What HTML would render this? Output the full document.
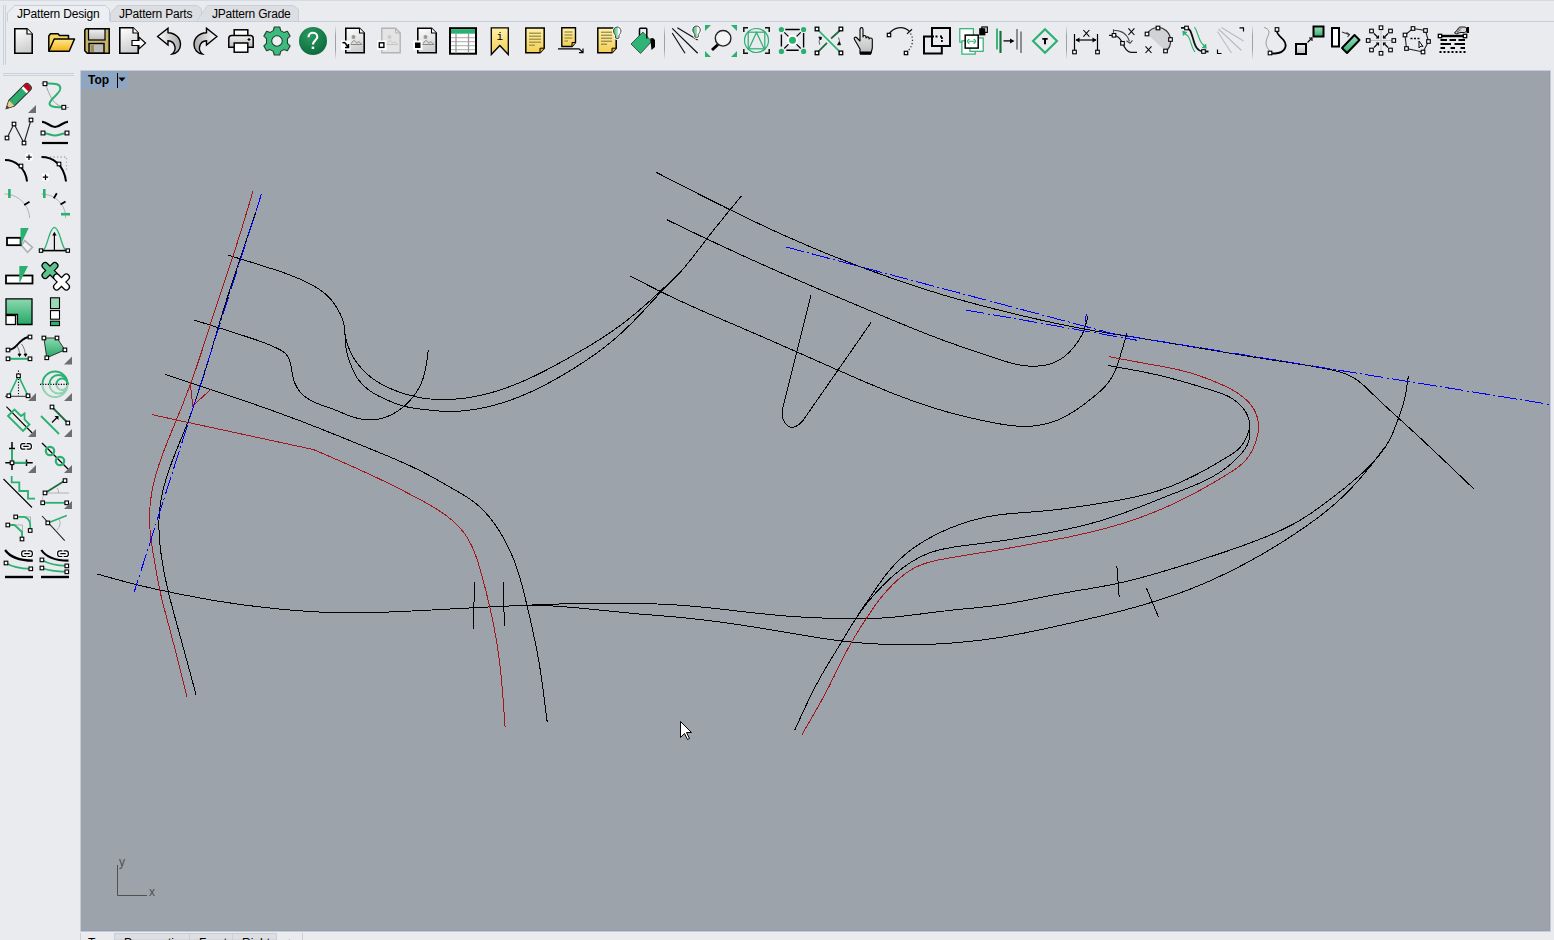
<!DOCTYPE html>
<html><head><meta charset="utf-8">
<style>
html,body{margin:0;padding:0;}
body{width:1554px;height:940px;overflow:hidden;background:#e9ebef;position:relative;font-family:"Liberation Sans",sans-serif;}
.abs{position:absolute;}
.tab{position:absolute;height:16px;font-size:12px;line-height:16px;color:#000;letter-spacing:-0.2px;white-space:nowrap;}
#viewport{left:80px;top:70px;width:1470px;height:861px;background:#9da3ab;}
</style></head>
<body>
<div class="abs" style="left:0;top:0;width:1554px;height:1px;background:#d5d9e0"></div>
<svg class="abs" style="left:0;top:0" width="1554" height="70">
  <line x1="3.5" y1="5" x2="3.5" y2="65" stroke="#c9d1de"/>
  <line x1="5.5" y1="5" x2="5.5" y2="65" stroke="#c9d1de"/>
  <path d="M110.5,21.5 L110.5,13 L117.5,5.5 L197.5,5.5 L201.5,9 L201.5,21.5 Z" fill="#dcdee2" stroke="#c8cfdc" stroke-width="1"/>
  <path d="M196.5,21.5 L207.5,5.5 L293.5,5.5 L298.5,9.5 L298.5,21.5 Z" fill="#dcdee2" stroke="#c8cfdc" stroke-width="1"/>
  <path d="M7.5,21.5 L7.5,13 L14.5,5.5 L105.5,5.5 L109.5,9.5 L109.5,21.5" fill="#eceef2" stroke="#c8cfdc" stroke-width="1"/>
  <line x1="110" y1="21.5" x2="1554" y2="21.5" stroke="#c8cfdc"/>
</svg>
<div class="tab" style="left:17px;top:6px">JPattern Design</div>
<div class="tab" style="left:119px;top:6px">JPattern Parts</div>
<div class="tab" style="left:212px;top:6px">JPattern Grade</div>
<div id="viewport" class="abs"></div>
<div class="abs" style="left:80px;top:70px;width:1471px;height:1px;background:#c5ccd8"></div>
<div class="abs" style="left:80px;top:70px;width:1px;height:862px;background:#c5ccd8"></div>
<div class="abs" style="left:1549px;top:71px;width:1px;height:860px;background:#979da6"></div>
<div class="abs" style="left:81px;top:930px;width:1469px;height:1px;background:#979da6"></div>
<div class="abs" style="left:1550px;top:70px;width:1px;height:862px;background:#c3ccdb"></div>
<div class="abs" style="left:80px;top:931px;width:1471px;height:1px;background:#c3ccdb"></div>
<div class="abs" style="left:81px;top:71px;width:47px;height:18px;background:#8ea6c2"></div>
<div class="abs" style="left:88px;top:72px;font-size:12px;font-weight:bold;line-height:16px;color:#000">Top</div>
<svg class="abs" style="left:110px;top:71px" width="20" height="18"><line x1="7.5" y1="2" x2="7.5" y2="17" stroke="#000"/><path d="M8.5,6.5 L15.5,6.5 L12,10.5 Z" fill="#000"/></svg>
<div class="abs" style="left:3px;top:73px;width:71px;height:1px;background:#c9d1de"></div>
<div class="abs" style="left:3px;top:75px;width:71px;height:1px;background:#c9d1de"></div>
<svg class="abs" style="left:0;top:0" width="1554" height="66">
<defs>
<linearGradient id="gDoc" x1="0" y1="0" x2="0.3" y2="1"><stop offset="0" stop-color="#ffffff"/><stop offset="1" stop-color="#cfcfcf"/></linearGradient>
<linearGradient id="gYel" x1="0" y1="0" x2="0" y2="1"><stop offset="0" stop-color="#fff1a8"/><stop offset="1" stop-color="#f2cf55"/></linearGradient>
<linearGradient id="gFold" x1="0" y1="0" x2="0" y2="1"><stop offset="0" stop-color="#ffe98a"/><stop offset="1" stop-color="#f5b21c"/></linearGradient>
<linearGradient id="gArrow" x1="0" y1="0" x2="1" y2="0"><stop offset="0" stop-color="#ffffff"/><stop offset="1" stop-color="#a9a9a9"/></linearGradient>
<linearGradient id="gArrowR" x1="1" y1="0" x2="0" y2="0"><stop offset="0" stop-color="#ffffff"/><stop offset="1" stop-color="#a9a9a9"/></linearGradient>
<linearGradient id="gGreen" x1="0" y1="0" x2="0" y2="1"><stop offset="0" stop-color="#9fdcbc"/><stop offset="1" stop-color="#2fb070"/></linearGradient>
<radialGradient id="gHelp" cx="0.4" cy="0.3" r="0.7"><stop offset="0" stop-color="#2b9a62"/><stop offset="1" stop-color="#0d6b3d"/></radialGradient>
<linearGradient id="gBulb" x1="0" y1="0" x2="1" y2="0"><stop offset="0" stop-color="#3dba7d"/><stop offset="0.55" stop-color="#a6dfc0"/><stop offset="0.56" stop-color="#fff"/><stop offset="1" stop-color="#fff"/></linearGradient>
<linearGradient id="gSep" gradientUnits="userSpaceOnUse" x1="0" y1="25" x2="0" y2="60"><stop offset="0" stop-color="#e9ebef"/><stop offset="0.3" stop-color="#9ea2a8"/><stop offset="0.7" stop-color="#9ea2a8"/><stop offset="1" stop-color="#e9ebef"/></linearGradient>
<linearGradient id="gGrey" x1="0" y1="0" x2="0" y2="1"><stop offset="0" stop-color="#f2f2f2"/><stop offset="1" stop-color="#bdbdbd"/></linearGradient>
</defs>
<!-- 1 new -->
<g transform="translate(14,28)" stroke="#000" stroke-width="1.6" stroke-linejoin="miter">
<path d="M0.8,0.8 H13 L18.2,6 V25.2 H0.8 Z" fill="url(#gDoc)"/><path d="M13,0.8 V6 H18.2" fill="#fff" stroke-width="1.2"/>
</g>
<!-- 2 open -->
<g transform="translate(48,33)" stroke="#000" stroke-width="1.5" stroke-linejoin="round">
<path d="M0.8,18 V3 L2.5,0.8 H10 L11.5,2.5 H20.5 V6" fill="#f7d660"/>
<path d="M0.8,18.2 L6.2,6 H26.5 L21.2,18.2 Z" fill="url(#gFold)"/>
</g>
<!-- 3 save -->
<g transform="translate(84,28)" stroke="#000" stroke-width="1.5">
<path d="M2,0.8 H25.2 V25.2 H3.2 L0.8,22.8 V2 Z" fill="#c8b46a"/>
<rect x="4.5" y="1" width="16.5" height="11" fill="url(#gGrey)" stroke-width="1.2"/>
<rect x="5" y="15.5" width="15" height="9.5" fill="#bcbcbc" stroke-width="1.4"/>
<rect x="6.5" y="17" width="3.5" height="7" fill="#9c8c4a" stroke="none"/>
</g>
<!-- 4 export -->
<g transform="translate(119,27)" stroke="#000" stroke-width="1.6">
<path d="M0.8,0.8 H14 L19.2,6 V26.2 H0.8 Z" fill="url(#gDoc)"/><path d="M14,0.8 V6 H19.2" fill="#fff" stroke-width="1.2"/>
<path d="M13,13.5 H20 V10 L26.5,16 L20,22 V18.5 H13 Z" fill="#fff" stroke-width="1.2"/>
</g>
<!-- 5 undo -->
<g transform="translate(157,27.5)" stroke="#000" stroke-width="1.4" stroke-linejoin="miter">
<path d="M0.6,9 L11,0.6 V5.2 C18.5,5.5 23.5,10.5 23.5,17 C23.5,22 20,26 15,26.5 C17.5,24.5 18.5,22 18,19.5 C17.3,16 14.5,13.5 11,13.3 V17.5 Z" fill="url(#gArrow)"/>
</g>
<!-- 6 redo -->
<g transform="translate(193.5,27.5)" stroke="#000" stroke-width="1.4" stroke-linejoin="miter">
<path d="M23.4,9 L13,0.6 V5.2 C5.5,5.5 0.5,10.5 0.5,17 C0.5,22 4,26 9,26.5 C6.5,24.5 5.5,22 6,19.5 C6.7,16 9.5,13.5 13,13.3 V17.5 Z" fill="url(#gArrowR)"/>
</g>
<!-- 7 printer -->
<g transform="translate(228,29)" stroke="#000" stroke-width="1.5">
<rect x="6.2" y="0.8" width="13.6" height="6" fill="#fff"/>
<path d="M0.8,18.2 V9.5 Q0.8,6.5 3.8,6.5 H22.2 Q25.2,6.5 25.2,9.5 V18.2 Z" fill="url(#gGrey)"/>
<rect x="6.2" y="14" width="13.6" height="9.2" fill="#fff"/>
<path d="M21,9 v3 M19.5,10.5 h3" stroke-width="1.2"/>
</g>
<!-- 8 gear -->
<g transform="translate(277,41) scale(1.06)">
<path d="M-2.6,-13.2 L2.6,-13.2 L3.5,-9.8 L6.4,-8.1 L9.8,-9.1 L12.4,-4.6 L9.9,-2.2 L9.9,2.2 L12.4,4.6 L9.8,9.1 L6.4,8.1 L3.5,9.8 L2.6,13.2 L-2.6,13.2 L-3.5,9.8 L-6.4,8.1 L-9.8,9.1 L-12.4,4.6 L-9.9,2.2 L-9.9,-2.2 L-12.4,-4.6 L-9.8,-9.1 L-6.4,-8.1 L-3.5,-9.8 Z" fill="#3dba7d" stroke="#2a3a30" stroke-width="1" stroke-linejoin="round"/>
<circle r="5" fill="#eef0f2" stroke="#1d3a2a" stroke-width="1"/>
</g>
<!-- 9 help -->
<g transform="translate(313,41)">
<circle r="14" fill="url(#gHelp)"/>

</g>
<path d="M308.5,37.2 C308.5,34.5 310.5,32.8 313,32.8 C315.5,32.8 317.3,34.6 317.3,37 C317.3,39.8 312.9,40.8 312.9,44.5" fill="none" stroke="#fff" stroke-width="2.1"/><rect x="311.7" y="46.6" width="2.5" height="2.4" fill="#fff"/>
<!-- separator -->
<line x1="335.5" y1="25" x2="335.5" y2="60" stroke="url(#gSep)"/>

<!-- 10 doc img arrow -->
<g transform="translate(345,27.5)">
<path d="M0.8,0.8 H14.5 L19.2,5.5 V25.2 H0.8 Z" fill="url(#gDoc)" stroke="#000" stroke-width="1.6"/><path d="M14.5,0.8 V5.5 H19.2" fill="#fff" stroke="#000" stroke-width="1.1"/>
<circle cx="8.5" cy="9.5" r="2" fill="#999"/><path d="M5,17 L9,12.8 L12,15.8 L13.8,14 L16.8,17 Z" fill="none" stroke="#888" stroke-width="1"/>
<rect x="-4" y="13" width="9.5" height="9.5" fill="#fff"/>
<path d="M-2.5,15.5 Q0,14 1.5,17.5 L3,19.5 M3.5,16.5 V20 H0" fill="none" stroke="#000" stroke-width="1.5"/>
</g>
<!-- 11 doc img disabled -->
<g transform="translate(381,27.5)">
<path d="M0.8,0.8 H14.5 L19.2,5.5 V25.2 H0.8 Z" fill="#e4e4e4" stroke="#b4b4b4" stroke-width="1.4"/><path d="M14.5,0.8 V5.5 H19.2" fill="none" stroke="#b4b4b4" stroke-width="1"/>
<circle cx="8.5" cy="9.5" r="2" fill="#ccc"/><path d="M5,17 L9,12.8 L12,15.8 L13.8,14 L16.8,17 Z" fill="none" stroke="#c4c4c4" stroke-width="1"/>
<rect x="-4" y="13" width="9.5" height="9.5" fill="#fff"/>
<rect x="-1.7" y="15.3" width="4.6" height="4.6" fill="#fff" stroke="#000" stroke-width="1.4"/>
</g>
<!-- 12 doc img black sq -->
<g transform="translate(417,27.5)">
<path d="M0.8,0.8 H14.5 L19.2,5.5 V25.2 H0.8 Z" fill="url(#gDoc)" stroke="#000" stroke-width="1.6"/><path d="M14.5,0.8 V5.5 H19.2" fill="#fff" stroke="#000" stroke-width="1.1"/>
<circle cx="8.5" cy="9.5" r="2" fill="#999"/><path d="M5,17 L9,12.8 L12,15.8 L13.8,14 L16.8,17 Z" fill="none" stroke="#888" stroke-width="1"/>
<rect x="-4" y="13" width="9.5" height="9.5" fill="#fff"/>
<rect x="-2" y="15" width="5.5" height="5.5" fill="#000"/>
</g>
<!-- 13 table -->
<g transform="translate(449,27.2)">
<rect x="1" y="1" width="26" height="25.5" fill="#fff" stroke="#000" stroke-width="2"/>
<rect x="2" y="2" width="24" height="4.5" fill="#2ab070"/>
<path d="M2,10.5 H26 M2,14.5 H26 M2,18.5 H26 M2,22.5 H26" stroke="#aaa" stroke-width="1"/>
<path d="M7,6.5 V26 M19.5,6.5 V26" stroke="#999" stroke-width="1.3"/>
</g>
<!-- 14 bookmark -->
<g transform="translate(490.5,27)">
<path d="M0.8,0.8 H17.8 V27.5 L9.3,18.5 L0.8,27.5 Z" fill="url(#gYel)" stroke="#000" stroke-width="1.3"/>
<text x="9.3" y="13" text-anchor="middle" font-family="Liberation Mono" font-size="11" fill="#000">i</text>
</g>
<!-- 15 yellow doc -->
<g transform="translate(525,27.2)">
<path d="M0.8,0.8 H19.2 V21 L15,25.5 H0.8 Z" fill="url(#gYel)" stroke="#000" stroke-width="1.5"/>
<path d="M15,25.5 V21 H19.2" fill="#f0b030" stroke="#000" stroke-width="1"/>
<path d="M4,6 H16 M4,9 H16 M4,12 H16 M4,15 H16 M4,18 H10" stroke="#a89a50" stroke-width="1.6"/>
</g>
<!-- 16 small doc + arrow -->
<g transform="translate(558,27)">
<path d="M3.8,0.8 H17.5 V15.5 L14,19.5 H3.8 Z" fill="url(#gYel)" stroke="#000" stroke-width="1.4"/>
<path d="M14,19.5 V15.5 H17.5" fill="#f0b030" stroke="#000" stroke-width="1"/>
<path d="M6.5,5 H14.5 M6.5,8 H14.5 M6.5,11 H14.5 M6.5,14 H10" stroke="#a89a50" stroke-width="1.6"/>
<path d="M0,21.8 H21 L25,25.5 M25,21.5 V25.7 H21" fill="none" stroke="#000" stroke-width="1.2"/>
</g>
<!-- 17 yellow doc + bulb -->
<g transform="translate(597,27.2)">
<path d="M0.8,0.8 H19.2 V21 L15,25.5 H0.8 Z" fill="url(#gYel)" stroke="#000" stroke-width="1.5"/>
<path d="M15,25.5 V21 H19.2" fill="#f0b030" stroke="#000" stroke-width="1"/>
<path d="M4,5 H15 M4,8 H15 M4,11 H15 M4,14 H15 M4,17 H10" stroke="#7a7040" stroke-width="1"/>
</g>
<g transform="translate(613.2,27.0)"><path d="M0.3,4 C0.3,1.5 2,0 4,0 C6,0 7.8,1.5 7.8,4 C7.8,6 6.5,7 5.8,8.5 V11 Q4,12.2 2.3,11 V8.5 C1.5,7 0.3,6 0.3,4 Z" fill="#fff" stroke="#fff" stroke-width="2.6"/><path d="M0.3,4 C0.3,1.5 2,0 4,0 C6,0 7.8,1.5 7.8,4 C7.8,6 6.5,7 5.8,8.5 V11 Q4,12.2 2.3,11 V8.5 C1.5,7 0.3,6 0.3,4 Z" fill="url(#gBulb)" stroke="#333" stroke-width="0.9"/></g>
<!-- 18 paint bucket -->
<g>
<path d="M639.5,38 V29.2 Q639.5,28.3 640.5,28.3 H646 Q646.8,28.3 646.8,29.2 V33" fill="none" stroke="#000" stroke-width="1.5"/>
<path d="M631,44 L642.9,32.1 L651.7,41.4 L640.5,53.5 Z" fill="#2eb575" stroke="#2a3a30" stroke-width="0.8"/>
<path d="M646.8,33 V38.5" stroke="#000" stroke-width="1.5"/>
<path d="M650.2,38.5 L653,38 L655,40 V47 L651.5,50 Z" fill="#000"/>
</g>
<line x1="664.5" y1="25" x2="664.5" y2="60" stroke="url(#gSep)"/>

<!-- 19 lines + bulb -->
<g transform="translate(671.5,26)">
<path d="M0.7,2.4 L26.2,27.3 M0.7,7 L13.5,27.3 M5.9,1.8 L26.2,14" stroke="#111" stroke-width="1.2" fill="none"/>
</g>
<g transform="translate(692.5,26.0)"><path d="M0.3,4 C0.3,1.5 2,0 4,0 C6,0 7.8,1.5 7.8,4 C7.8,6 6.5,7 5.8,8.5 V11 Q4,12.2 2.3,11 V8.5 C1.5,7 0.3,6 0.3,4 Z" fill="#fff" stroke="#fff" stroke-width="2.6"/><path d="M0.3,4 C0.3,1.5 2,0 4,0 C6,0 7.8,1.5 7.8,4 C7.8,6 6.5,7 5.8,8.5 V11 Q4,12.2 2.3,11 V8.5 C1.5,7 0.3,6 0.3,4 Z" fill="url(#gBulb)" stroke="#333" stroke-width="0.9"/></g>
<!-- 20 zoom -->
<g transform="translate(705,25)">
<path d="M0,0 H6 L0,6 Z M32,0 H26 L32,6 Z M0,32 H6 L0,26 Z M32,32 H26 L32,26 Z" fill="#2ab070"/>
<path d="M13,19.5 L7,25" stroke="#000" stroke-width="3"/>
<circle cx="18.1" cy="13.3" r="7.8" fill="#f4f4f4" stroke="#222" stroke-width="1.4"/>
</g>
<!-- 21 circle square triangle -->
<g transform="translate(743,27)">
<path d="M0.8,5 V0.8 H5 M22,0.8 H26.2 V5 M26.2,22 V26.2 H22 M5,26.2 H0.8 V22" fill="none" stroke="#111" stroke-width="1.5"/>
<circle cx="13.5" cy="13.5" r="12" fill="none" stroke="#2ab070" stroke-width="1.2"/>
<rect x="5.2" y="5.2" width="16.6" height="16.6" fill="none" stroke="#2ab070" stroke-width="1.2"/>
<path d="M6,21.5 L13.5,5.5 L21,21.5" fill="none" stroke="#2ab070" stroke-width="1.2"/>
</g>
<!-- 22 square dots -->
<g>
<path d="M785.3,29.5 H799.7 M786.3,50.3 H798.7 M781.4,34.4 V46.5 M803.6,33 V47.5" stroke="#000" stroke-width="1.4"/>
<path d="M784.3,32.3 L788.6,36.7 M800.7,32.3 L796.4,36.7 M784.3,48.5 L788.6,44.1 M800.7,48.5 L796.4,44.1" stroke="#000" stroke-width="1.2"/>
<circle cx="792.5" cy="40.3" r="5.5" fill="#fff"/>
<circle cx="792.5" cy="40.3" r="3.5" fill="#2ab070"/>
<circle cx="781.4" cy="29.5" r="2.6" fill="#2ab070"/><circle cx="803.6" cy="29.5" r="2.6" fill="#2ab070"/>
<circle cx="781.4" cy="51.4" r="2.6" fill="#2ab070"/><circle cx="803.6" cy="51.4" r="2.6" fill="#2ab070"/>
</g>
<!-- 23 x squares -->
<g>
<path d="M817,29 L840.9,52.9" stroke="#2ab070" stroke-width="1.7"/>
<path d="M818,51.9 L827,42.9 M831.1,38.5 L839.9,30.5" stroke="#1d6a40" stroke-width="1.7"/>
<path d="M819.8,38.5 Q818.3,41.5 819.8,44.7 M838.5,37.5 Q840.2,40.5 838.8,43.8" fill="none" stroke="#555" stroke-width="0.9"/>
<path d="M818.8,37 L821.5,37.3 L820.8,40 Z M837.5,44.8 L840.5,44.8 L839.5,41.8 Z" fill="#000" stroke="#000" stroke-width="0.8"/>
<rect x="815.2" y="27.2" width="3.6" height="3.6" fill="#fff" stroke="#000" stroke-width="1.3"/><rect x="839.1" y="27.2" width="3.6" height="3.6" fill="#fff" stroke="#000" stroke-width="1.3"/><rect x="815.2" y="51.1" width="3.6" height="3.6" fill="#fff" stroke="#000" stroke-width="1.3"/><rect x="839.1" y="51.1" width="3.6" height="3.6" fill="#fff" stroke="#000" stroke-width="1.3"/>
</g>
<!-- 24 hand -->
<g transform="translate(853.5,27)">
<path d="M6.5,26.5 V22 L1,12.5 C0,11 1.5,9.5 3,10.5 L6.5,14 V2.5 C6.5,0 9.5,0 9.5,2.5 V10 C9.5,8 12.5,8 12.5,10 V11 C12.5,9.5 15.5,9.5 15.5,11 V12 C15.5,10.5 18.8,10.5 18.8,12.5 V21 L17.5,26.5 Z" fill="url(#gGrey)" stroke="#000" stroke-width="1.1" stroke-linejoin="round"/>
<rect x="6.5" y="24.5" width="11" height="3.3" fill="#000"/>
</g>
<!-- 25 arc -->
<g>
<path d="M889,34 C893,27.5 903,25 909.5,31.5" fill="none" stroke="#111" stroke-width="1.3"/>
<path d="M907,33.9 L912,29.2" stroke="#111" stroke-width="1.3"/>
<path d="M910.5,33.5 C913.5,38 913.5,45 908,51" fill="none" stroke="#333" stroke-width="1.3" stroke-dasharray="1.3,2"/>
<rect x="887.3" y="33.3" width="3.4" height="3.4" fill="#fff" stroke="#000" stroke-width="1.2"/><rect x="904.3" y="51.3" width="3.4" height="3.4" fill="#fff" stroke="#000" stroke-width="1.2"/>
</g>
<!-- 26 two squares -->
<g>
<rect x="932" y="28" width="18" height="18" fill="none" stroke="#000" stroke-width="2"/>
<path d="M932,36.5 H924 V53.5 H941.8 V46" fill="none" stroke="#000" stroke-width="2"/>
<path d="M932,35.5 h2 v2 h-2 Z M935.5,35.5 h2 v2 h-2 Z M940,35.5 h2 v2 h-2 Z M941,37 h1.8 v2 h-1.8 Z M941,40 h1.8 v2 h-1.8 Z" fill="#000"/>
</g>
<!-- 27 linked squares -->
<g transform="translate(959,26)">
<rect x="0.8" y="2.7" width="13.6" height="13.4" fill="#fff" stroke="#2ab070" stroke-width="1.2"/>
<rect x="2.9" y="14.8" width="13.3" height="13.3" fill="#fff" stroke="#2ab070" stroke-width="1.2"/>
<rect x="10.9" y="12" width="13.3" height="13.3" fill="#fff" stroke="#2ab070" stroke-width="1.2"/>
<rect x="6.2" y="9.1" width="13" height="13" fill="#fff" stroke="#000" stroke-width="1.5"/>
<path d="M10.5,13.5 H9.5 L8.3,15.3 L9.5,17.1 H10.5 M14.5,13.5 H15.5 L16.7,15.3 L15.5,17.1 H14.5 M9.5,15.3 H15.5" fill="none" stroke="#2ab070" stroke-width="1.1"/>
<rect x="22.9" y="1" width="5.4" height="5.4" fill="#fff" stroke="#000" stroke-width="1.2"/>
<rect x="20.2" y="2.2" width="6.2" height="7.2" fill="#000"/>
</g>
<!-- 28 bars arrow -->
<g transform="translate(996,28.4)">
<path d="M1,0 V21 M4.5,2.5 V24.5" stroke="#2ab070" stroke-width="1.8"/>
<path d="M4.5,2.5 V24.5" stroke="#1d6a40" stroke-width="1.8"/>
<path d="M7.5,12.5 H15" stroke="#000" stroke-width="1.3"/><path d="M14,10 L18.5,12.5 L14,15 Z" fill="#000"/>
<path d="M21,0.5 V21 M25,3 V24.5" stroke="#777" stroke-width="1.6"/>
</g>
<!-- 29 diamond T -->
<g transform="translate(1032,27.7)">
<path d="M13,1.5 L25,13.3 L13,25.1 L1,13.3 Z" fill="none" stroke="#2ab070" stroke-width="2.1"/>
<path d="M10.3,10.3 H15.7 V12 H14 V16.5 H12 V12 H10.3 Z" fill="#000"/>
</g>
<line x1="1066.5" y1="25" x2="1066.5" y2="60" stroke="url(#gSep)"/>

<path d="M1083.4,30.0 L1089.4,36.6 M1089.4,30.0 L1083.4,36.6" stroke="#000" stroke-width="1.1"/><path d="M1128.4,28.4 L1134.4,35.0 M1134.4,28.4 L1128.4,35.0" stroke="#000" stroke-width="1.1"/><path d="M1145.5,46.4 L1151.5,53.0 M1151.5,46.4 L1145.5,53.0" stroke="#000" stroke-width="1.1"/>
<!-- 30 dimension X -->
<g transform="translate(1073,28)">
<path d="M1.5,6 V24 M24.5,6 V24" stroke="#000" stroke-width="1.2"/>
<path d="M3,12 H23" stroke="#000" stroke-width="1.2"/><path d="M2.5,12 L6.5,9.5 V14.5 Z M23.5,12 L19.5,9.5 V14.5 Z" fill="#000"/>
<rect x="-0.3" y="22.2" width="3.6" height="3.6" fill="#fff" stroke="#000" stroke-width="1.1"/><rect x="22.7" y="22.2" width="3.6" height="3.6" fill="#fff" stroke="#000" stroke-width="1.1"/>
</g>
<!-- 31 curve X arrow -->
<g transform="translate(1109,27.8)">
<path d="M0,7.5 H5 M5,7.5 C10,8 12,12 13.5,15 C15.5,20.5 17.5,24.5 22,24.5 H28" fill="none" stroke="#111" stroke-width="1.2"/>
<path d="M4.5,1.5 V5 M4.5,2.5 C12,2.5 18,6 20.5,13.5" fill="none" stroke="#444" stroke-width="1.1"/>
<path d="M17.5,13 L21,15.5 L23.5,12.5" fill="none" stroke="#444" stroke-width="1.1"/>
<rect x="3.2" y="5.7" width="3.6" height="3.6" fill="#fff" stroke="#000" stroke-width="1.1"/><rect x="11.7" y="13.7" width="3.6" height="3.6" fill="#fff" stroke="#000" stroke-width="1.1"/>
</g>
<!-- 32 circle segment -->
<g transform="translate(1145,27)">
<path d="M2,7 C5,2 10,0.5 13,0.5 C19,0.5 25,5 25.5,12.5 C26,18 24,22 20.5,24 L13,17 Z" fill="#d0d2d6" stroke="none"/>
<path d="M2,7 C5,2 10,0.5 13,0.5 C19,0.5 25,5 25.5,12.5 C26,18 24,22 20.5,24" fill="none" stroke="#333" stroke-width="1.2"/>
<rect x="0.2" y="5.2" width="3.6" height="3.6" fill="#fff" stroke="#000" stroke-width="1.1"/><rect x="11.2" y="-0.8" width="3.6" height="3.6" fill="#fff" stroke="#000" stroke-width="1.1"/><rect x="23.7" y="10.7" width="3.6" height="3.6" fill="#fff" stroke="#000" stroke-width="1.1"/><rect x="18.7" y="22.2" width="3.6" height="3.6" fill="#fff" stroke="#000" stroke-width="1.1"/>
</g>
<!-- 33 S curve arrows -->
<g transform="translate(1181,27)">
<path d="M0,0.8 H5 C9,1 10,5 12,11.5 C14,19 16,24 22,24.5 H27.5" fill="none" stroke="#111" stroke-width="1.8"/>
<path d="M13.5,0 C17,5 17,11 20.5,16 L24.5,20" fill="none" stroke="#2ab070" stroke-width="1.1"/>
<path d="M21,20.5 L25,21 L24.5,17" fill="#2ab070" stroke="#2ab070" stroke-width="1.2"/>
<path d="M14,25 C10,20 10,13 7,9 L3,6" fill="none" stroke="#2ab070" stroke-width="1.1"/>
<path d="M6,5.5 L2,4.5 L2.5,8.5" fill="#2ab070" stroke="#2ab070" stroke-width="1.2"/>
<rect x="3.7" y="-0.8" width="3.6" height="3.6" fill="#fff" stroke="#000" stroke-width="1.1"/><rect x="20.7" y="22.7" width="3.6" height="3.6" fill="#fff" stroke="#000" stroke-width="1.1"/>
</g>
<!-- 34 disabled lines -->
<g transform="translate(1216.5,27)" stroke="#b8bbc0" stroke-width="1.1" fill="none">
<path d="M1,4.5 L15,26 M2,2 L25,23.5 M5,0.5 L27,14"/>
<path d="M23,0.8 H27 V4.5 M1,22.5 V26.5 H5" stroke="#000" stroke-width="1.2"/>
</g>
<line x1="1252.5" y1="25" x2="1252.5" y2="60" stroke="url(#gSep)"/>
<!-- 35 curve squares -->
<g transform="translate(1263,27)">
<path d="M1,0.5 C6,1.5 7,5 5,9 C3,13 1.5,18 6,23 L8,25" fill="none" stroke="#999" stroke-width="1"/>
<path d="M13.5,3 C14,8 18,10 20.5,13 C25,19 22,26 12,26.5 H7" fill="none" stroke="#000" stroke-width="1.8"/>
<rect x="12.2" y="0.7" width="3.6" height="3.6" fill="#fff" stroke="#000" stroke-width="1.1"/><rect x="5.2" y="24.2" width="3.6" height="3.6" fill="#fff" stroke="#000" stroke-width="1.1"/>
</g>
<!-- 36 scale squares -->
<g transform="translate(1295,25.5)">
<rect x="1" y="18.5" width="10" height="10" fill="url(#gGrey)" stroke="#000" stroke-width="2"/>
<rect x="18.5" y="1" width="10" height="10" fill="url(#gGreen)" stroke="#000" stroke-width="2"/>
<path d="M12.5,17 L17,12.5" stroke="#000" stroke-width="1.1"/><path d="M14,12.5 H17 V15.5" fill="none" stroke="#000" stroke-width="1.1"/>
</g>
<!-- 37 rect rotate -->
<g transform="translate(1331,27)">
<rect x="1" y="1" width="7" height="18.5" fill="#fff" stroke="#000" stroke-width="2"/>
<path d="M11,5 L18,7.5" stroke="#333" stroke-width="1.1"/><path d="M15.5,5.5 L18.5,7.5 L16.5,10" fill="none" stroke="#333" stroke-width="1.1"/>
<path d="M11,21 L23.5,8 L28.5,13 L16,26 Z" fill="url(#gGreen)" stroke="#000" stroke-width="2" stroke-linejoin="round"/>
</g>
<!-- 38 converge -->
<g transform="translate(1366,25.5)">
<path d="M15,2 V28 M2,15 H28" stroke="#bbb" stroke-width="1"/>
<path d="M8,8 L12.5,12.5 M22,8 L17.5,12.5 M8,22 L12.5,17.5 M22,22 L17.5,17.5" stroke="#000" stroke-width="1.1"/>
<path d="M10,12.5 H12.5 V10 M20,12.5 H17.5 V10 M10,17.5 H12.5 V20 M20,17.5 H17.5 V20" fill="none" stroke="#000" stroke-width="1.1"/>
<rect x="13.2" y="0.4" width="3.6" height="3.6" fill="#fff" stroke="#000" stroke-width="1.1"/><rect x="13.2" y="26.0" width="3.6" height="3.6" fill="#fff" stroke="#000" stroke-width="1.1"/><rect x="0.4" y="13.2" width="3.6" height="3.6" fill="#fff" stroke="#000" stroke-width="1.1"/><rect x="26.0" y="13.2" width="3.6" height="3.6" fill="#fff" stroke="#000" stroke-width="1.1"/><rect x="3.7" y="3.7" width="3.6" height="3.6" fill="#fff" stroke="#000" stroke-width="1.1"/><rect x="22.7" y="3.7" width="3.6" height="3.6" fill="#fff" stroke="#000" stroke-width="1.1"/><rect x="3.7" y="22.7" width="3.6" height="3.6" fill="#fff" stroke="#000" stroke-width="1.1"/><rect x="22.7" y="22.7" width="3.6" height="3.6" fill="#fff" stroke="#000" stroke-width="1.1"/>
</g>
<!-- 39 polygon -->
<g transform="translate(1403.5,27)">
<path d="M1.5,8 L9.5,1.5 L22,3.5 L25,14.5 L19.5,25 L3,21.5 Z" fill="none" stroke="#222" stroke-width="1.1"/>
<path d="M7,11.5 H9 M10.5,11.5 H12.5 M14,11.5 H16" stroke="#000" stroke-width="1.6"/>
<path d="M15.5,14 V21 L17.5,19 L19.5,19.5 Z" fill="#fff" stroke="#000" stroke-width="1"/>
<rect x="-0.3" y="6.2" width="3.6" height="3.6" fill="#fff" stroke="#000" stroke-width="1.1"/><rect x="7.7" y="-0.3" width="3.6" height="3.6" fill="#fff" stroke="#000" stroke-width="1.1"/><rect x="20.2" y="1.7" width="3.6" height="3.6" fill="#fff" stroke="#000" stroke-width="1.1"/><rect x="23.2" y="12.7" width="3.6" height="3.6" fill="#fff" stroke="#000" stroke-width="1.1"/><rect x="17.7" y="23.2" width="3.6" height="3.6" fill="#fff" stroke="#000" stroke-width="1.1"/><rect x="1.2" y="19.7" width="3.6" height="3.6" fill="#fff" stroke="#000" stroke-width="1.1"/>
</g>
<!-- 40 lines pencil -->
<g>
<path d="M1440,36 H1465" stroke="#000" stroke-width="2.4"/>
<path d="M1440.5,40 H1447 M1449.5,40 H1456 M1458.5,40 H1465" stroke="#000" stroke-width="2"/>
<path d="M1440.5,44 H1451 M1454.5,44 H1465" stroke="#000" stroke-width="2"/>
<path d="M1440.5,48 H1445 M1450.5,48 H1455 M1460.5,48 H1465" stroke="#000" stroke-width="2"/>
<path d="M1439.5,52 h2 M1443.5,52 h2 M1447.5,52 h2 M1451.5,52 h2 M1455.5,52 h2 M1459.5,52 h2 M1463.5,52 h2" stroke="#000" stroke-width="2"/>
<path d="M1454.5,33 L1459.5,27 H1465 L1466.5,28 V31.5 L1464.5,32.5 H1460 L1457,34 Z" fill="#d8d8d8" stroke="#000" stroke-width="0.9"/>
<path d="M1455,32.5 L1460,27.5 M1457,33 L1461.5,28 M1456,30.5 L1459,32.5 M1457.5,29 L1460.5,31" stroke="#555" stroke-width="0.7"/>
<rect x="1466.5" y="27" width="2.5" height="6" fill="#000"/>
<rect x="1438.3" y="34.3" width="3.4" height="3.4" fill="#fff" stroke="#000" stroke-width="1.3"/><rect x="1463.3" y="34.3" width="3.4" height="3.4" fill="#fff" stroke="#000" stroke-width="1.3"/>
</g>
</svg>
<svg class="abs" style="left:0;top:0" width="80" height="600">
<defs><linearGradient id="lgG" x1="0" y1="0" x2="0" y2="1"><stop offset="0" stop-color="#8ed8b0"/><stop offset="1" stop-color="#23a865"/></linearGradient><linearGradient id="lgG2" x1="0" y1="0" x2="1" y2="1"><stop offset="0" stop-color="#5ac08a"/><stop offset="1" stop-color="#a8e0c0"/></linearGradient></defs>
<g transform="translate(6,108.8) rotate(-45)">
<path d="M0,0 L8,-4 H30.5 Q33.5,-4 33.5,-1 V1 Q33.5,4 30.5,4 H8 Z" fill="#2ab070" stroke="#333" stroke-width="1.1" stroke-linejoin="round"/>
<path d="M28,-3.5 H30.5 Q33,-3.5 33,-1 V1 Q33,3.5 30.5,3.5 H28 Z" fill="#c8001a"/>
<rect x="25.5" y="-3.5" width="2.5" height="7" fill="#fff"/>
<path d="M0.5,0 L8,-3.6 V3.6 Z" fill="#f2cc88"/><path d="M0,0 L3.2,-1.6 V1.6 Z" fill="#444"/>
<path d="M10,-1.3 H25 M10,1.3 H25" stroke="#26a066" stroke-width="0.6"/>
</g>
<path d="M36.0,105.0 L36.0,113.0 L28.0,113.0 Z" fill="#6e6e6e"/>
<path d="M45,83.5 C50,95 52,104 62.5,107" fill="none" stroke="#999" stroke-width="0.9"/>
<path d="M45,83.5 C55,83 62,84 60,90 C58,95 49,100 49.5,104 C50,107 57,107.5 64,107" fill="none" stroke="#2ab070" stroke-width="2"/>
<path d="M41.5,83.5 H45 M64,107.5 H69" stroke="#999" stroke-width="0.9"/>
<rect x="43.1" y="81.8" width="3.8" height="3.8" fill="#fff" stroke="#000" stroke-width="1.1"/><rect x="61.9" y="105.4" width="3.8" height="3.8" fill="#fff" stroke="#000" stroke-width="1.1"/>
<path d="M7,138 L14,124 L24,143 L31,120" fill="none" stroke="#222" stroke-width="1.1"/>
<rect x="5.2" y="136.2" width="3.6" height="3.6" fill="#fff" stroke="#000" stroke-width="1.1"/><rect x="12.2" y="122.2" width="3.6" height="3.6" fill="#fff" stroke="#000" stroke-width="1.1"/><rect x="22.2" y="141.2" width="3.6" height="3.6" fill="#fff" stroke="#000" stroke-width="1.1"/><rect x="29.2" y="118.2" width="3.6" height="3.6" fill="#fff" stroke="#000" stroke-width="1.1"/>
<path d="M42,121.8 C46.5,121.5 50,127 55,127 C60,127 63.5,121.5 68,121.8" fill="none" stroke="#000" stroke-width="2.2"/>
<path d="M43,133 C49,133.5 51,135.5 55,135.5 C59,135.5 61,133.5 67,133" fill="none" stroke="#2ab070" stroke-width="2"/>
<path d="M42,143 H68" stroke="#000" stroke-width="2.2"/>
<rect x="41.1" y="131.1" width="3.8" height="3.8" fill="#fff" stroke="#000" stroke-width="1.1"/><rect x="65.1" y="131.1" width="3.8" height="3.8" fill="#fff" stroke="#000" stroke-width="1.1"/>
<path d="M5,160 C15,160 26,168 27,181.5" fill="none" stroke="#000" stroke-width="2"/>
<rect x="19.2" y="164.2" width="3.6" height="3.6" fill="#fff" stroke="#000" stroke-width="1.1"/>
<rect x="25.5" y="153.5" width="7" height="7" fill="#fff"/><path d="M29,154.5 V160 M26.3,157.2 H31.7" stroke="#000" stroke-width="1.2"/>
<path d="M50,157 H66.5 V172" fill="none" stroke="#aaa" stroke-width="1.3" stroke-dasharray="1.3,2.2"/>
<path d="M41.5,157 C52,157 64,164 66,181.5" fill="none" stroke="#000" stroke-width="2"/>
<rect x="57.2" y="162.2" width="3.6" height="3.6" fill="#fff" stroke="#000" stroke-width="1.1"/>
<rect x="42" y="173.5" width="7" height="7" fill="#fff"/><path d="M45.5,174.5 V180 M42.8,177.2 H48.2" stroke="#000" stroke-width="1.2"/>
<path d="M4.5,194 C16,194 29,203 29.5,218" fill="none" stroke="#aaa" stroke-width="0.9"/>
<path d="M9.4,189 V198" stroke="#2ab070" stroke-width="2.6"/>
<path d="M24.2,205 L29.5,201.8" stroke="#000" stroke-width="1.8"/>
<path d="M41.5,194 C53,194 66,203 65.5,218" fill="none" stroke="#aaa" stroke-width="0.9"/>
<path d="M44.3,189 V198" stroke="#2ab070" stroke-width="2.6"/>
<path d="M53.8,198.2 L56.8,193.2 M60.5,204.5 L65.5,201.5" stroke="#000" stroke-width="1.8"/>
<path d="M61,214.2 H70" stroke="#2ab070" stroke-width="2.6"/>
<path d="M21.3,245.2 L24.8,240.6 L32.4,247.3 L27.6,252.3 Z" fill="#f2f3f5" stroke="#b0b1b5" stroke-width="1.6"/>
<rect x="7" y="237.8" width="13.6" height="7.4" fill="#fff" stroke="#000" stroke-width="1.8"/>
<path d="M20.5,228 H28.7 L20.5,245.5 Z" fill="#2ab070"/>
<path d="M43.5,250 C48,246 49,228 54.4,227.3 C60,228 61,246 65.5,250" fill="none" stroke="#2ab070" stroke-width="1.3"/>
<path d="M41,250.6 H68" stroke="#000" stroke-width="1.6"/><path d="M54.4,250 V234" stroke="#000" stroke-width="1.2"/><path d="M52.2,235.5 L54.4,231.8 L56.6,235.5 Z" fill="#000"/>
<rect x="39.3" y="248.9" width="3.4" height="3.4" fill="#fff" stroke="#000" stroke-width="1.1"/><rect x="66.1" y="248.9" width="3.4" height="3.4" fill="#fff" stroke="#000" stroke-width="1.1"/>
<rect x="6" y="275.5" width="26.5" height="8" fill="#fff" stroke="#000" stroke-width="1.8"/>
<path d="M19.3,266 H28 L19.3,283.5 Z" fill="#2ab070"/>
<path d="M45.2,265.7 L54.8,275.3 M45.2,275.3 L54.8,265.7" stroke="#000" stroke-width="7.4" stroke-linecap="round"/><path d="M45.2,265.7 L54.8,275.3 M45.2,275.3 L54.8,265.7" stroke="#5cc28e" stroke-width="5" stroke-linecap="round"/>
<path d="M56.7,277.2 L66.3,286.8 M56.7,286.8 L66.3,277.2" stroke="#000" stroke-width="7.4" stroke-linecap="round"/><path d="M56.7,277.2 L66.3,286.8 M56.7,286.8 L66.3,277.2" stroke="#fff" stroke-width="5" stroke-linecap="round"/>
<path d="M6,298.8 H32 V324.5 H17.5 V314.5 H6 Z" fill="url(#lgG)" stroke="#000" stroke-width="1.3"/>
<rect x="6" y="315.5" width="9.5" height="9" fill="#fff" stroke="#000" stroke-width="1.3"/>
<rect x="50.5" y="297.8" width="9" height="10.8" fill="#9ad8b6" stroke="#000" stroke-width="1.1"/>
<rect x="50.5" y="310.6" width="9" height="8.6" fill="#fff" stroke="#000" stroke-width="1.1"/>
<rect x="50.5" y="321.2" width="9" height="4.4" fill="#2ab070" stroke="#000" stroke-width="1.1"/>
<path d="M8,350 C14,350 16,346 20,342 C24,338 27,337 30,337" fill="none" stroke="#000" stroke-width="1.8"/>
<path d="M17,346 C19,349 19.5,352 19.5,355 M21.5,344 C24,347 25,351 25.5,355" fill="none" stroke="#777" stroke-width="1"/>
<path d="M18,354 L19.5,356.5 L21,354 Z M24,354 L25.5,356.5 L27,354 Z" fill="#000" stroke="#000" stroke-width="0.8"/>
<path d="M8,358.8 H30" stroke="#2ab070" stroke-width="2"/>
<rect x="6.2" y="348.2" width="3.6" height="3.6" fill="#fff" stroke="#000" stroke-width="1.1"/><rect x="28.2" y="335.2" width="3.6" height="3.6" fill="#fff" stroke="#000" stroke-width="1.1"/><rect x="6.2" y="357.0" width="3.6" height="3.6" fill="#fff" stroke="#000" stroke-width="1.1"/><rect x="28.2" y="357.0" width="3.6" height="3.6" fill="#fff" stroke="#000" stroke-width="1.1"/>
<path d="M43.9,338 H57 L64.9,349.9 L46.8,357.8 Z" fill="url(#lgG)" stroke="#222" stroke-width="0.9"/>
<path d="M41.5,338 H46 M55,336 L58.5,339 M63,348 L67,352 M44,360 L47,357" stroke="#888" stroke-width="0.8"/>
<rect x="42.1" y="336.2" width="3.6" height="3.6" fill="#fff" stroke="#000" stroke-width="1.1"/><rect x="55.2" y="336.2" width="3.6" height="3.6" fill="#fff" stroke="#000" stroke-width="1.1"/><rect x="63.1" y="348.1" width="3.6" height="3.6" fill="#fff" stroke="#000" stroke-width="1.1"/><rect x="45.0" y="356.0" width="3.6" height="3.6" fill="#fff" stroke="#000" stroke-width="1.1"/>
<path d="M72.0,356.5 L72.0,364.5 L64.0,364.5 Z" fill="#6e6e6e"/>
<path d="M8.8,395.8 L18.5,375.8 L28,395.8" fill="none" stroke="#2ab070" stroke-width="1.6"/>
<path d="M5,396.3 H30.5" stroke="#333" stroke-width="1"/>
<path d="M18.5,370.5 V396" stroke="#000" stroke-width="1.1" stroke-dasharray="1.2,1.6"/>
<rect x="16.7" y="374.0" width="3.6" height="3.6" fill="#fff" stroke="#000" stroke-width="1.1"/><rect x="7.0" y="394.0" width="3.6" height="3.6" fill="#fff" stroke="#000" stroke-width="1.1"/><rect x="26.2" y="394.0" width="3.6" height="3.6" fill="#fff" stroke="#000" stroke-width="1.1"/>
<path d="M36.0,393.0 L36.0,401.0 L28.0,401.0 Z" fill="#6e6e6e"/>
<g fill="none" stroke-width="2">
<path d="M42.5,384 A12.5,12.5 0 0 1 67.5,384" stroke="#2ab070"/>
<path d="M49.5,384 A9,9 0 0 1 67.5,384" stroke="#2ab070"/>
<path d="M56.5,384 A5.5,5.5 0 0 1 67.5,384" stroke="#2ab070"/>
<path d="M42.5,384.5 A12.5,12.5 0 0 0 67.5,384.5 M49.5,384.5 A9,9 0 0 0 67.5,384.5 M56.5,384.5 A5.5,5.5 0 0 0 67.5,384.5" stroke="#8fd4ae"/>
</g>
<path d="M40,384.4 H69" stroke="#000" stroke-width="1.1" stroke-dasharray="1.2,1.4"/>
<path d="M72.0,393.0 L72.0,401.0 L64.0,401.0 Z" fill="#6e6e6e"/>
<path d="M6.4,406.6 L32.2,433" stroke="#000" stroke-width="1.1"/>
<path d="M8,416 L14.5,409.5 L21,416 L24.5,413.5 L24.5,419.5 L29.5,424.5 L23,431 Z" fill="none" stroke="#2ab070" stroke-width="1.8" stroke-linejoin="miter"/>
<path d="M36.0,429.0 L36.0,437.0 L28.0,437.0 Z" fill="#6e6e6e"/>
<path d="M41,416 L59,434" stroke="#2ab070" stroke-width="1.8"/>
<path d="M52,407 L67.8,423" stroke="#1d6a40" stroke-width="1.8"/>
<path d="M52,422.5 L57.5,417" stroke="#000" stroke-width="1.2"/><path d="M54.5,416 L58.5,416 L58.5,420 Z" fill="#000"/>
<rect x="50.2" y="405.2" width="3.6" height="3.6" fill="#fff" stroke="#000" stroke-width="1.1"/><rect x="66.0" y="421.2" width="3.6" height="3.6" fill="#fff" stroke="#000" stroke-width="1.1"/>
<path d="M72.0,429.0 L72.0,437.0 L64.0,437.0 Z" fill="#6e6e6e"/>
<path d="M12,442 V470 M5.3,462.8 H32.7 M9,448.5 H15 M26.5,459.5 V466" stroke="#000" stroke-width="1.5"/>
<path d="M12,449 V462.8 H26.5" fill="none" stroke="#2ab070" stroke-width="2"/>
<rect x="10.2" y="461.0" width="3.6" height="3.6" fill="#fff" stroke="#000" stroke-width="1.1"/>
<path d="M25.3,443.6 H22.8 Q20.6,443.6 20.6,446.4 Q20.6,449.2 22.8,449.2 H25.3 M26.7,443.6 H29.2 Q31.4,443.6 31.4,446.4 Q31.4,449.2 29.2,449.2 H26.7 M23.3,446.4 H28.7" fill="none" stroke="#fff" stroke-width="2.8"/><path d="M25.3,443.6 H22.8 Q20.6,443.6 20.6,446.4 Q20.6,449.2 22.8,449.2 H25.3 M26.7,443.6 H29.2 Q31.4,443.6 31.4,446.4 Q31.4,449.2 29.2,449.2 H26.7 M23.3,446.4 H28.7" fill="none" stroke="#000" stroke-width="1.2"/>
<path d="M36.0,465.0 L36.0,473.0 L28.0,473.0 Z" fill="#6e6e6e"/>
<path d="M42,443 L69,470" stroke="#000" stroke-width="1.3"/>
<circle cx="50" cy="451" r="4.2" fill="none" stroke="#2ab070" stroke-width="2.2"/><circle cx="60" cy="461" r="4.2" fill="none" stroke="#2ab070" stroke-width="2.2"/>
<path d="M72.0,465.0 L72.0,473.0 L64.0,473.0 Z" fill="#6e6e6e"/>
<path d="M3.5,479 L32,507.5" stroke="#000" stroke-width="1.1"/>
<path d="M11.7,476 V482.4 H19.3 V491 H28 V498.7 H35" fill="none" stroke="#2ab070" stroke-width="1.8"/>
<path d="M45,493 H69" stroke="#aaa" stroke-width="0.9"/><path d="M57,488 Q59,490 58.5,493" fill="none" stroke="#aaa" stroke-width="0.9"/>
<path d="M44,494 Q41.5,498 43,502" fill="none" stroke="#bbb" stroke-width="0.9"/>
<path d="M45,492.9 L65,480.6" stroke="#1d6a40" stroke-width="1.8"/>
<path d="M42.7,502.8 H66.7" stroke="#2ab070" stroke-width="1.8"/>
<rect x="43.2" y="491.1" width="3.6" height="3.6" fill="#fff" stroke="#000" stroke-width="1.1"/><rect x="63.2" y="478.8" width="3.6" height="3.6" fill="#fff" stroke="#000" stroke-width="1.1"/><rect x="40.9" y="501.0" width="3.6" height="3.6" fill="#fff" stroke="#000" stroke-width="1.1"/><rect x="64.9" y="501.0" width="3.6" height="3.6" fill="#fff" stroke="#000" stroke-width="1.1"/>
<path d="M72.0,501.0 L72.0,509.0 L64.0,509.0 Z" fill="#6e6e6e"/>
<path d="M15.7,516.9 H30.5 V528 M7.8,525 H22.5 V535" fill="none" stroke="#aaa" stroke-width="0.9"/>
<path d="M15.7,516.9 H23 C27,516.9 30,520 30.2,524.5 V530.5" fill="none" stroke="#2ab070" stroke-width="1.8"/>
<path d="M7.8,525 H14.5 L22,532 V539" fill="none" stroke="#2ab070" stroke-width="1.8"/>
<rect x="13.9" y="515.1" width="3.6" height="3.6" fill="#fff" stroke="#000" stroke-width="1.1"/><rect x="28.4" y="528.7" width="3.6" height="3.6" fill="#fff" stroke="#000" stroke-width="1.1"/><rect x="6.0" y="523.2" width="3.6" height="3.6" fill="#fff" stroke="#000" stroke-width="1.1"/><rect x="20.2" y="537.2" width="3.6" height="3.6" fill="#fff" stroke="#000" stroke-width="1.1"/>
<path d="M42.1,516 L64.7,540.7" stroke="#222" stroke-width="1.1"/>
<path d="M59.5,519.5 Q61.5,525 57,530" fill="none" stroke="#aaa" stroke-width="0.9"/>
<path d="M47.8,522.9 L66.8,515.6" stroke="#2ab070" stroke-width="1.6"/>
<rect x="46.0" y="521.1" width="3.6" height="3.6" fill="#fff" stroke="#000" stroke-width="1.1"/>
<path d="M5.1,550 C10,557 18,560.5 32.8,560.7" fill="none" stroke="#000" stroke-width="2.2"/>
<path d="M6,563 C12,567 18,568.5 30.8,568.8" fill="none" stroke="#2ab070" stroke-width="1.7"/>
<path d="M5,577 H33" stroke="#000" stroke-width="2.4"/>
<path d="M26.3,550.9 H23.8 Q21.6,550.9 21.6,553.7 Q21.6,556.5 23.8,556.5 H26.3 M27.7,550.9 H30.2 Q32.4,550.9 32.4,553.7 Q32.4,556.5 30.2,556.5 H27.7 M24.3,553.7 H29.7" fill="none" stroke="#fff" stroke-width="2.8"/><path d="M26.3,550.9 H23.8 Q21.6,550.9 21.6,553.7 Q21.6,556.5 23.8,556.5 H26.3 M27.7,550.9 H30.2 Q32.4,550.9 32.4,553.7 Q32.4,556.5 30.2,556.5 H27.7 M24.3,553.7 H29.7" fill="none" stroke="#000" stroke-width="1.2"/>
<rect x="4.2" y="561.2" width="3.6" height="3.6" fill="#fff" stroke="#000" stroke-width="1.1"/><rect x="29.0" y="567.0" width="3.6" height="3.6" fill="#fff" stroke="#000" stroke-width="1.1"/>
<path d="M41.3,550 C46,557 54,560.5 68.5,560.7" fill="none" stroke="#000" stroke-width="2.2"/>
<path d="M41.9,559.9 C48,563.5 54,565.5 66.8,565.9 M41.9,568 C48,570.5 54,571.5 66.8,571.8" fill="none" stroke="#2ab070" stroke-width="1.7"/>
<path d="M41,577 H69" stroke="#000" stroke-width="2.4"/>
<path d="M62.3,550.9 H59.8 Q57.6,550.9 57.6,553.7 Q57.6,556.5 59.8,556.5 H62.3 M63.7,550.9 H66.2 Q68.4,550.9 68.4,553.7 Q68.4,556.5 66.2,556.5 H63.7 M60.3,553.7 H65.7" fill="none" stroke="#fff" stroke-width="2.8"/><path d="M62.3,550.9 H59.8 Q57.6,550.9 57.6,553.7 Q57.6,556.5 59.8,556.5 H62.3 M63.7,550.9 H66.2 Q68.4,550.9 68.4,553.7 Q68.4,556.5 66.2,556.5 H63.7 M60.3,553.7 H65.7" fill="none" stroke="#000" stroke-width="1.2"/>
<rect x="40.1" y="558.1" width="3.6" height="3.6" fill="#fff" stroke="#000" stroke-width="1.1"/><rect x="65.0" y="564.1" width="3.6" height="3.6" fill="#fff" stroke="#000" stroke-width="1.1"/><rect x="40.1" y="566.2" width="3.6" height="3.6" fill="#fff" stroke="#000" stroke-width="1.1"/><rect x="65.0" y="570.0" width="3.6" height="3.6" fill="#fff" stroke="#000" stroke-width="1.1"/>
</svg>
<svg class="abs" style="left:0;top:0" width="1554" height="940">
<defs><clipPath id="vc"><rect x="81" y="71" width="1469" height="860"/></clipPath></defs>
<g clip-path="url(#vc)" fill="none" stroke-width="1" shape-rendering="crispEdges">
<g stroke="#000">
<path d="M255.7,212.4 L254.9,214.8 L254.1,217.2 L253.3,219.6 L252.5,222.0 L251.6,224.3 L250.8,226.7 L250.0,229.1 L249.2,231.5 L248.4,233.9 L247.6,236.3 L246.8,238.7 L246.0,241.1 L245.2,243.5 L244.3,245.8 L243.5,248.2 L242.7,250.6 L241.9,253.0 L241.1,255.4 L240.3,257.8 L239.5,260.2 L238.7,262.6 L237.9,265.0 L237.1,267.4 L236.3,269.8 L235.5,272.2 L234.7,274.6 L234.0,277.0 L233.2,279.4 L232.4,281.8 L231.6,284.2 L230.8,286.6 L230.1,289.0 L229.3,291.4 L228.5,293.8 L227.8,296.2 L227.0,298.6 L226.3,301.0 L225.5,303.4 L224.8,305.8 L224.0,308.2 L223.3,310.6 L222.5,313.0 L221.8,315.4 L221.1,317.9 L220.3,320.3 L219.6,322.7 L218.9,325.1 L218.2,327.5 L217.4,329.9 L216.7,332.4 L216.0,334.8 L215.3,337.2 L214.6,339.6 L213.8,342.0 L213.1,344.5 L212.4,346.9 L211.7,349.3 L211.0,351.7 L210.2,354.1 L209.5,356.5 L208.8,359.0 L208.1,361.4 L207.3,363.8 L206.6,366.2 L205.8,368.6 L205.1,371.0 L204.4,373.4 L203.6,375.8 L202.8,378.3 L202.1,380.7 L201.3,383.1 L200.6,385.5 L199.8,387.9 L199.0,390.3 L198.2,392.7 L197.4,395.1 L196.6,397.4 L195.8,399.8 L195.0,402.2 L194.2,404.6 L193.3,407.0 L192.5,409.4 L191.7,411.8 L190.8,414.1 L189.9,416.5 L189.1,418.9 L188.2,421.2 L187.3,423.6 L186.3,425.9 L185.4,428.3 L184.5,430.6 L183.5,432.9 L182.6,435.3 L181.6,437.6 L180.7,440.0 L179.7,442.3 L178.8,444.6 L177.8,447.0 L176.9,449.3 L175.9,451.6 L175.0,454.0 L174.1,456.3 L173.2,458.7 L172.2,461.0 L171.4,463.4 L170.5,465.8 L169.6,468.2 L168.8,470.5 L168.0,472.9 L167.2,475.3 L166.4,477.7 L165.7,480.1 L165.0,482.6 L164.3,485.0 L163.7,487.4 L163.1,489.9 L162.5,492.4 L162.0,494.8 L161.5,497.3 L161.0,499.8 L160.6,502.3 L160.3,504.8 L160.0,507.3 L159.7,509.8 L159.4,512.3 L159.2,514.8 L159.1,517.4 L159.0,519.9 L158.9,522.4 L158.9,524.9 L158.9,527.5 L159.0,530.0 L159.1,532.5 L159.2,535.0 L159.4,537.6 L159.6,540.1 L159.8,542.6 L160.0,545.1 L160.3,547.6 L160.6,550.1 L160.9,552.6 L161.2,555.1 L161.6,557.6 L162.0,560.1 L162.4,562.6 L162.8,565.1 L163.2,567.6 L163.7,570.1 L164.1,572.6 L164.6,575.0 L165.1,577.5 L165.7,580.0 L166.2,582.4 L166.7,584.9 L167.3,587.4 L167.9,589.8 L168.4,592.3 L169.0,594.7 L169.6,597.2 L170.3,599.6 L170.9,602.1 L171.5,604.5 L172.2,607.0 L172.8,609.4 L173.4,611.8 L174.1,614.3 L174.8,616.7 L175.4,619.1 L176.1,621.6 L176.8,624.0 L177.4,626.4 L178.1,628.9 L178.8,631.3 L179.5,633.7 L180.1,636.2 L180.8,638.6 L181.5,641.0 L182.1,643.5 L182.8,645.9 L183.5,648.3 L184.1,650.8 L184.8,653.2 L185.5,655.6 L186.1,658.1 L186.8,660.5 L187.4,662.9 L188.1,665.4 L188.8,667.8 L189.4,670.2 L190.1,672.7 L190.7,675.1 L191.4,677.6 L192.1,680.0 L192.7,682.4 L193.4,684.9 L194.0,687.3 L194.7,689.7 L195.3,692.2 L196.0,694.6"/>
<path d="M165.1,374.5 L167.5,375.3 L169.9,376.1 L172.3,376.9 L174.7,377.7 L177.1,378.4 L179.5,379.2 L181.9,380.0 L184.2,380.8 L186.6,381.6 L189.0,382.4 L191.4,383.2 L193.8,384.0 L196.2,384.8 L198.6,385.5 L201.0,386.3 L203.4,387.1 L205.8,387.9 L208.2,388.7 L210.6,389.5 L213.0,390.3 L215.4,391.1 L217.8,391.9 L220.1,392.7 L222.5,393.5 L224.9,394.3 L227.3,395.1 L229.7,395.9 L232.1,396.7 L234.5,397.5 L236.9,398.3 L239.3,399.1 L241.6,399.9 L244.0,400.7 L246.4,401.5 L248.8,402.3 L251.2,403.2 L253.6,404.0 L255.9,404.8 L258.3,405.6 L260.7,406.5 L263.1,407.3 L265.4,408.1 L267.8,409.0 L270.2,409.8 L272.6,410.7 L274.9,411.5 L277.3,412.4 L279.7,413.2 L282.0,414.1 L284.4,415.0 L286.8,415.8 L289.1,416.7 L291.5,417.6 L293.8,418.5 L296.2,419.4 L298.5,420.2 L300.9,421.1 L303.2,422.0 L305.6,422.9 L307.9,423.9 L310.3,424.8 L312.6,425.7 L315.0,426.6 L317.3,427.5 L319.7,428.4 L322.0,429.4 L324.3,430.3 L326.7,431.2 L329.0,432.2 L331.3,433.1 L333.7,434.1 L336.0,435.0 L338.4,435.9 L340.7,436.9 L343.0,437.8 L345.4,438.8 L347.7,439.7 L350.0,440.7 L352.4,441.6 L354.7,442.6 L357.0,443.5 L359.4,444.5 L361.7,445.4 L364.0,446.4 L366.4,447.3 L368.7,448.3 L371.0,449.2 L373.4,450.2 L375.7,451.1 L378.1,452.1 L380.4,453.0 L382.7,454.0 L385.1,455.0 L387.4,455.9 L389.7,456.9 L392.0,457.9 L394.4,458.9 L396.7,459.8 L399.0,460.9 L401.3,461.9 L403.6,462.9 L405.9,463.9 L408.2,465.0 L410.5,466.0 L412.7,467.1 L415.0,468.2 L417.3,469.3 L419.5,470.4 L421.8,471.5 L424.0,472.7 L426.2,473.9 L428.4,475.0 L430.6,476.2 L432.9,477.4 L435.1,478.7 L437.3,479.9 L439.5,481.1 L441.7,482.3 L443.8,483.6 L446.0,484.8 L448.2,486.1 L450.4,487.4 L452.6,488.6 L454.8,489.9 L457.0,491.2 L459.2,492.4 L461.4,493.7 L463.5,495.0 L465.7,496.4 L467.8,497.7 L469.9,499.1 L472.0,500.6 L474.0,502.1 L476.0,503.6 L477.9,505.2 L479.8,506.9 L481.6,508.6 L483.4,510.4 L485.1,512.2 L486.8,514.1 L488.5,516.0 L490.1,517.9 L491.6,519.9 L493.2,522.0 L494.6,524.0 L496.1,526.1 L497.5,528.2 L498.9,530.4 L500.2,532.5 L501.5,534.7 L502.8,536.9 L504.0,539.1 L505.2,541.3 L506.4,543.5 L507.5,545.8 L508.6,548.0 L509.7,550.3 L510.8,552.6 L511.8,554.9 L512.7,557.2 L513.7,559.6 L514.6,561.9 L515.5,564.3 L516.3,566.7 L517.1,569.0 L517.9,571.4 L518.7,573.8 L519.4,576.2 L520.1,578.6 L520.8,581.1 L521.5,583.5 L522.2,585.9 L522.8,588.4 L523.4,590.8 L524.0,593.3 L524.6,595.7 L525.2,598.2 L525.8,600.6 L526.4,603.1 L527.0,605.5 L527.6,608.0 L528.2,610.4 L528.7,612.9 L529.3,615.4 L529.9,617.8 L530.4,620.3 L531.0,622.7 L531.6,625.2 L532.1,627.6 L532.6,630.1 L533.2,632.6 L533.7,635.0 L534.2,637.5 L534.8,639.9 L535.3,642.4 L535.8,644.9 L536.3,647.4 L536.7,649.8 L537.2,652.3 L537.7,654.8 L538.1,657.2 L538.5,659.7 L539.0,662.2 L539.4,664.7 L539.8,667.2 L540.2,669.7 L540.6,672.1 L541.0,674.6 L541.3,677.1 L541.7,679.6 L542.0,682.1 L542.4,684.6 L542.7,687.1 L543.1,689.6 L543.4,692.1 L543.7,694.6 L544.0,697.1 L544.4,699.6 L544.7,702.1 L545.0,704.6 L545.3,707.1 L545.6,709.6 L545.9,712.1 L546.3,714.6 L546.6,717.1 L546.9,719.6 L547.2,722.1"/>
<path d="M228.5,255.2 L230.9,255.9 L233.3,256.7 L235.7,257.4 L238.1,258.2 L240.5,258.9 L242.9,259.7 L245.3,260.4 L247.7,261.2 L250.2,261.9 L252.6,262.7 L255.0,263.4 L257.4,264.2 L259.8,264.9 L262.2,265.7 L264.6,266.4 L267.0,267.2 L269.3,268.0 L271.7,268.7 L274.1,269.5 L276.5,270.3 L278.9,271.1 L281.3,271.9 L283.6,272.7 L286.0,273.6 L288.4,274.5 L290.7,275.4 L293.1,276.3 L295.4,277.2 L297.7,278.2 L300.1,279.2 L302.4,280.2 L304.7,281.3 L307.0,282.4 L309.2,283.5 L311.5,284.7 L313.7,285.9 L315.9,287.2 L318.1,288.6 L320.2,290.0 L322.3,291.5 L324.3,293.0 L326.2,294.6 L328.0,296.3 L329.7,298.1 L331.4,300.0 L332.9,302.0 L334.4,304.1 L335.8,306.2 L337.1,308.3 L338.4,310.5 L339.6,312.7 L340.7,315.0 L341.8,317.3 L342.6,319.7 L343.3,322.1 L343.9,324.5 L344.3,327.0 L344.6,329.5 L344.8,332.1 L345.0,334.6 L345.1,337.1 L345.3,339.6 L345.4,342.2 L345.7,344.7 L345.9,347.2 L346.3,349.6 L346.8,352.1 L347.4,354.5 L348.1,356.9 L348.9,359.4 L349.7,361.8 L350.5,364.1 L351.5,366.5 L352.4,368.9 L353.5,371.2 L354.6,373.4 L355.8,375.7 L357.1,377.8 L358.6,379.9 L360.1,381.8 L361.8,383.7 L363.6,385.5 L365.4,387.2 L367.4,388.8 L369.4,390.4 L371.5,391.8 L373.6,393.2 L375.8,394.5 L378.0,395.7 L380.2,396.8 L382.5,397.9 L384.8,399.0 L387.1,400.0 L389.4,401.0 L391.7,402.0 L394.1,403.0 L396.4,403.8 L398.8,404.7 L401.2,405.4 L403.6,406.1 L406.1,406.7 L408.5,407.2 L411.0,407.7 L413.5,408.1 L416.0,408.5 L418.5,408.8 L421.0,409.1 L423.5,409.4 L426.0,409.7 L428.5,410.0 L431.0,410.3 L433.5,410.6 L436.0,410.8 L438.5,411.0 L441.0,411.1 L443.5,411.3 L446.1,411.4 L448.6,411.4 L451.1,411.4 L453.6,411.4 L456.1,411.3 L458.6,411.2 L461.2,411.0 L463.7,410.8 L466.2,410.5 L468.7,410.2 L471.2,409.9 L473.7,409.6 L476.2,409.1 L478.7,408.7 L481.2,408.2 L483.7,407.7 L486.1,407.2 L488.6,406.6 L491.1,406.0 L493.5,405.4 L496.0,404.7 L498.4,404.0 L500.8,403.3 L503.2,402.5 L505.7,401.8 L508.0,401.0 L510.4,400.1 L512.8,399.3 L515.2,398.4 L517.5,397.5 L519.9,396.5 L522.2,395.6 L524.5,394.6 L526.8,393.6 L529.1,392.6 L531.4,391.6 L533.7,390.5 L536.0,389.4 L538.3,388.3 L540.5,387.2 L542.8,386.1 L545.0,384.9 L547.3,383.7 L549.5,382.5 L551.7,381.3 L553.9,380.1 L556.1,378.9 L558.3,377.6 L560.5,376.4 L562.7,375.1 L564.9,373.8 L567.0,372.5 L569.2,371.2 L571.4,369.9 L573.5,368.6 L575.7,367.2 L577.8,365.9 L579.9,364.5 L582.0,363.1 L584.2,361.7 L586.3,360.3 L588.3,358.9 L590.4,357.5 L592.5,356.0 L594.6,354.6 L596.6,353.1 L598.6,351.6 L600.7,350.1 L602.7,348.6 L604.7,347.1 L606.7,345.5 L608.6,344.0 L610.6,342.4 L612.5,340.8 L614.4,339.2 L616.4,337.5 L618.2,335.9 L620.1,334.2 L622.0,332.5 L623.8,330.8 L625.6,329.0 L627.4,327.3 L629.2,325.5 L631.0,323.8 L632.8,322.0 L634.5,320.2 L636.3,318.4 L638.0,316.5 L639.8,314.7 L641.5,312.9 L643.2,311.1 L644.9,309.2 L646.7,307.4 L648.4,305.5 L650.1,303.7 L651.8,301.8 L653.5,300.0 L655.3,298.2 L657.0,296.3 L658.7,294.5 L660.5,292.7 L662.3,290.9 L664.0,289.1 L665.8,287.3 L667.5,285.5 L669.3,283.7 L671.1,281.9 L672.8,280.1 L674.6,278.2 L676.3,276.4 L678.0,274.6 L679.7,272.7 L681.4,270.9 L683.0,269.0 L684.7,267.1 L686.3,265.1 L687.9,263.2 L689.5,261.2 L691.1,259.3 L692.6,257.3 L694.2,255.3 L695.7,253.3 L697.2,251.3 L698.8,249.3 L700.3,247.3 L701.8,245.3 L703.4,243.3 L704.9,241.3 L706.4,239.3 L708.0,237.3 L709.5,235.3 L711.1,233.3 L712.6,231.4 L714.2,229.4 L715.7,227.4 L717.3,225.4 L718.9,223.5 L720.5,221.5 L722.1,219.6 L723.6,217.6 L725.2,215.7 L726.8,213.7 L728.4,211.8 L730.0,209.8 L731.6,207.9 L733.2,205.9 L734.8,204.0 L736.4,202.0 L738.0,200.1 L739.6,198.1 L741.2,196.2"/>
<path d="M344.9,333.8 L345.4,336.3 L345.9,338.7 L346.6,341.2 L347.3,343.6 L348.1,346.0 L348.9,348.3 L349.9,350.7 L351.0,352.9 L352.1,355.2 L353.4,357.4 L354.7,359.5 L356.1,361.6 L357.6,363.6 L359.2,365.6 L360.8,367.6 L362.5,369.5 L364.2,371.3 L366.0,373.1 L367.9,374.8 L369.8,376.4 L371.8,377.9 L373.8,379.4 L375.9,380.8 L378.1,382.1 L380.2,383.4 L382.4,384.6 L384.7,385.8 L387.0,386.9 L389.2,388.0 L391.5,389.0 L393.9,389.9 L396.2,390.9 L398.6,391.7 L400.9,392.6 L403.3,393.4 L405.7,394.1 L408.2,394.8 L410.6,395.5 L413.0,396.1 L415.5,396.7 L418.0,397.2 L420.4,397.7 L422.9,398.1 L425.4,398.4 L427.9,398.7 L430.4,399.0 L432.9,399.2 L435.4,399.4 L438.0,399.5 L440.5,399.5 L443.0,399.6 L445.5,399.5 L448.1,399.5 L450.6,399.4 L453.1,399.2 L455.6,399.1 L458.1,398.8 L460.6,398.6 L463.2,398.3 L465.7,398.0 L468.2,397.6 L470.7,397.2 L473.1,396.8 L475.6,396.3 L478.1,395.8 L480.6,395.3 L483.0,394.7 L485.5,394.1 L488.0,393.5 L490.4,392.9 L492.8,392.2 L495.3,391.5 L497.7,390.7 L500.1,390.0 L502.5,389.2 L504.9,388.4 L507.2,387.5 L509.6,386.6 L511.9,385.8 L514.3,384.8 L516.6,383.9 L519.0,383.0 L521.3,382.0 L523.6,381.0 L525.9,380.0 L528.2,378.9 L530.5,377.9 L532.8,376.8 L535.0,375.7 L537.3,374.6 L539.6,373.5 L541.8,372.4 L544.1,371.2 L546.3,370.1 L548.5,368.9 L550.8,367.7 L553.0,366.5 L555.2,365.3 L557.4,364.1 L559.6,362.9 L561.9,361.7 L564.1,360.5 L566.3,359.2 L568.5,358.0 L570.7,356.7 L572.9,355.5 L575.0,354.2 L577.2,353.0 L579.4,351.7 L581.6,350.4 L583.8,349.2 L585.9,347.9 L588.1,346.6 L590.3,345.3 L592.4,344.0 L594.6,342.7 L596.7,341.3 L598.8,340.0 L601.0,338.6 L603.1,337.3 L605.2,335.9 L607.3,334.5 L609.4,333.1 L611.4,331.7 L613.5,330.2 L615.6,328.8 L617.6,327.3 L619.6,325.9 L621.7,324.4 L623.7,322.8 L625.7,321.3 L627.6,319.8 L629.6,318.2 L631.6,316.6 L633.5,315.0 L635.5,313.4 L637.4,311.8 L639.3,310.2 L641.2,308.5 L643.1,306.9 L645.0,305.2 L646.9,303.6 L648.8,301.9 L650.7,300.2 L652.5,298.5 L654.4,296.8 L656.2,295.1 L658.1,293.3 L659.9,291.6 L661.7,289.9 L663.5,288.1 L665.4,286.4 L667.2,284.6 L669.0,282.9 L670.8,281.1 L672.6,279.4 L674.4,277.6 L676.2,275.9 L678.0,274.1 L679.8,272.4 L681.6,270.6"/>
<path d="M194.5,320.2 L196.9,321.0 L199.4,321.7 L201.8,322.5 L204.2,323.2 L206.6,324.0 L209.1,324.8 L211.5,325.5 L213.9,326.3 L216.3,327.0 L218.8,327.8 L221.2,328.6 L223.6,329.3 L226.0,330.1 L228.4,330.9 L230.9,331.6 L233.3,332.4 L235.7,333.2 L238.1,334.0 L240.5,334.7 L242.9,335.5 L245.4,336.3 L247.8,337.1 L250.2,337.9 L252.6,338.7 L255.0,339.5 L257.4,340.3 L259.8,341.2 L262.2,342.0 L264.5,342.9 L266.9,343.8 L269.2,344.8 L271.6,345.8 L273.9,346.8 L276.2,347.9 L278.5,349.0 L280.8,350.2 L283.0,351.5 L285.0,353.1 L286.7,354.9 L288.1,357.1 L289.2,359.4 L290.0,361.8 L290.7,364.3 L291.2,366.8 L291.6,369.3 L292.0,371.8 L292.4,374.3 L292.9,376.8 L293.5,379.3 L294.3,381.7 L295.3,384.1 L296.4,386.4 L297.7,388.6 L299.2,390.7 L300.8,392.7 L302.6,394.5 L304.5,396.2 L306.5,397.7 L308.6,399.1 L310.8,400.4 L313.1,401.6 L315.5,402.7 L317.8,403.7 L320.2,404.6 L322.7,405.5 L325.1,406.3 L327.5,407.1 L329.9,407.9 L332.3,408.8 L334.6,409.7 L337.0,410.7 L339.3,411.6 L341.6,412.6 L344.0,413.6 L346.3,414.6 L348.7,415.5 L351.1,416.4 L353.5,417.2 L356.0,417.9 L358.5,418.5 L361.0,419.0 L363.5,419.4 L366.0,419.6 L368.6,419.8 L371.1,419.8 L373.7,419.6 L376.2,419.4 L378.7,419.0 L381.2,418.4 L383.7,417.7 L386.1,417.0 L388.5,416.0 L390.8,415.0 L393.1,413.9 L395.3,412.6 L397.5,411.2 L399.6,409.8 L401.6,408.2 L403.6,406.6 L405.5,404.9 L407.4,403.1 L409.2,401.3 L410.9,399.4 L412.6,397.4 L414.1,395.4 L415.6,393.3 L417.0,391.1 L418.4,389.0 L419.6,386.7 L420.7,384.5 L421.7,382.1 L422.6,379.8 L423.4,377.4 L424.1,375.0 L424.8,372.5 L425.3,370.0 L425.8,367.5 L426.2,365.0 L426.6,362.5 L427.0,360.0 L427.3,357.4 L427.6,354.9 L428.0,352.3 L428.3,349.8"/>
<path d="M656.1,172.3 L658.3,173.4 L660.6,174.6 L662.8,175.7 L665.0,176.9 L667.3,178.0 L669.5,179.1 L671.7,180.3 L674.0,181.4 L676.2,182.6 L678.4,183.7 L680.7,184.9 L682.9,186.0 L685.1,187.1 L687.4,188.3 L689.6,189.4 L691.9,190.5 L694.1,191.7 L696.3,192.8 L698.6,194.0 L700.8,195.1 L703.0,196.2 L705.3,197.4 L707.5,198.5 L709.8,199.6 L712.0,200.7 L714.2,201.9 L716.5,203.0 L718.7,204.1 L721.0,205.2 L723.2,206.3 L725.5,207.5 L727.7,208.6 L730.0,209.7 L732.2,210.8 L734.5,211.9 L736.7,213.0 L739.0,214.1 L741.2,215.2 L743.5,216.3 L745.7,217.4 L748.0,218.5 L750.3,219.6 L752.5,220.7 L754.8,221.8 L757.1,222.8 L759.3,223.9 L761.6,225.0 L763.9,226.1 L766.1,227.1 L768.4,228.2 L770.7,229.2 L773.0,230.3 L775.2,231.3 L777.5,232.4 L779.8,233.4 L782.1,234.4 L784.4,235.5 L786.7,236.5 L789.0,237.5 L791.3,238.5 L793.6,239.5 L795.9,240.5 L798.2,241.5 L800.5,242.5 L802.8,243.5 L805.1,244.5 L807.4,245.5 L809.7,246.5 L812.0,247.5 L814.3,248.4 L816.6,249.4 L819.0,250.4 L821.3,251.3 L823.6,252.3 L825.9,253.2 L828.2,254.2 L830.6,255.1 L832.9,256.0 L835.2,257.0 L837.6,257.9 L839.9,258.8 L842.2,259.7 L844.6,260.6 L846.9,261.6 L849.2,262.5 L851.6,263.4 L853.9,264.3 L856.3,265.2 L858.6,266.1 L861.0,266.9 L863.3,267.8 L865.7,268.7 L868.0,269.6 L870.4,270.5 L872.7,271.3 L875.1,272.2 L877.4,273.0 L879.8,273.9 L882.2,274.8 L884.5,275.6 L886.9,276.4 L889.3,277.3 L891.6,278.1 L894.0,278.9 L896.4,279.8 L898.7,280.6 L901.1,281.4 L903.5,282.2 L905.9,283.0 L908.2,283.8 L910.6,284.6 L913.0,285.4 L915.4,286.2 L917.8,287.0 L920.2,287.7 L922.5,288.5 L924.9,289.3 L927.3,290.0 L929.7,290.8 L932.1,291.5 L934.5,292.3 L936.9,293.0 L939.3,293.7 L941.7,294.5 L944.1,295.2 L946.5,295.9 L948.9,296.6 L951.3,297.3 L953.7,298.0 L956.2,298.7 L958.6,299.4 L961.0,300.1 L963.4,300.7 L965.8,301.4 L968.2,302.1 L970.7,302.7 L973.1,303.4 L975.5,304.0 L977.9,304.7 L980.4,305.3 L982.8,305.9 L985.2,306.6 L987.6,307.2 L990.1,307.8 L992.5,308.5 L994.9,309.1 L997.4,309.7 L999.8,310.3 L1002.2,310.9 L1004.7,311.5 L1007.1,312.1 L1009.6,312.7 L1012.0,313.3 L1014.4,313.9 L1016.9,314.5 L1019.3,315.0 L1021.8,315.6 L1024.2,316.2 L1026.6,316.8 L1029.1,317.3 L1031.5,317.9 L1034.0,318.5 L1036.4,319.0 L1038.9,319.6 L1041.3,320.2 L1043.8,320.7 L1046.2,321.3 L1048.7,321.8 L1051.1,322.3 L1053.6,322.9 L1056.0,323.4 L1058.5,323.9 L1060.9,324.4 L1063.4,324.9 L1065.8,325.4 L1068.3,325.9 L1070.8,326.4 L1073.2,326.9 L1075.7,327.4 L1078.2,327.9 L1080.6,328.3 L1083.1,328.8 L1085.6,329.3 L1088.0,329.7 L1090.5,330.1 L1093.0,330.6 L1095.4,331.0 L1097.9,331.4 L1100.4,331.8 L1102.9,332.2 L1105.3,332.7 L1107.8,333.1 L1110.3,333.5 L1112.8,333.9 L1115.2,334.3 L1117.7,334.7 L1120.2,335.1 L1122.7,335.4 L1125.1,335.8 L1127.6,336.2 L1130.1,336.6 L1132.6,337.0 L1135.1,337.4 L1137.5,337.8 L1140.0,338.2 L1142.5,338.6 L1145.0,339.0 L1147.4,339.4 L1149.9,339.8 L1152.4,340.2 L1154.9,340.6 L1157.3,341.1 L1159.8,341.5 L1162.3,341.9 L1164.8,342.3 L1167.2,342.7 L1169.7,343.1 L1172.2,343.5 L1174.7,343.9 L1177.1,344.3 L1179.6,344.7 L1182.1,345.1 L1184.6,345.5 L1187.0,346.0 L1189.5,346.4 L1192.0,346.8 L1194.5,347.2 L1196.9,347.6 L1199.4,348.0 L1201.9,348.4 L1204.4,348.9 L1206.9,349.3 L1209.3,349.7 L1211.8,350.1 L1214.3,350.5 L1216.8,350.9 L1219.2,351.3 L1221.7,351.8 L1224.2,352.2 L1226.7,352.6 L1229.2,353.0 L1231.6,353.4 L1234.1,353.8 L1236.6,354.2 L1239.1,354.6 L1241.5,355.1 L1244.0,355.5 L1246.5,355.9 L1249.0,356.3 L1251.5,356.7 L1253.9,357.1 L1256.4,357.5 L1258.9,357.9 L1261.4,358.3 L1263.8,358.7 L1266.3,359.1 L1268.8,359.5 L1271.2,359.8 L1273.7,360.2 L1276.2,360.6 L1278.7,361.0 L1281.1,361.4 L1283.6,361.7 L1286.1,362.1 L1288.5,362.5 L1291.0,362.9 L1293.5,363.3 L1295.9,363.6 L1298.4,364.0 L1300.9,364.4 L1303.4,364.8 L1305.8,365.2 L1308.3,365.6 L1310.8,366.0 L1313.3,366.4 L1315.7,366.9 L1318.2,367.3 L1320.7,367.8 L1323.2,368.2 L1325.7,368.7 L1328.2,369.2 L1330.7,369.7 L1333.1,370.3 L1335.6,370.9 L1338.1,371.5 L1340.5,372.2 L1342.9,372.9 L1345.2,373.8 L1347.5,374.7 L1349.8,375.7 L1352.0,376.9 L1354.1,378.1 L1356.2,379.5 L1358.2,380.9 L1360.2,382.5 L1362.1,384.1 L1364.0,385.7 L1365.9,387.4 L1367.8,389.1 L1369.6,390.9 L1371.4,392.7 L1373.2,394.5 L1375.1,396.3 L1376.9,398.1 L1378.7,399.8 L1380.5,401.6 L1382.4,403.3 L1384.2,405.0 L1386.0,406.7 L1387.9,408.4 L1389.7,410.1 L1391.6,411.8 L1393.4,413.5 L1395.3,415.2 L1397.2,416.8 L1399.0,418.5 L1400.9,420.2 L1402.7,421.8 L1404.6,423.5 L1406.4,425.2 L1408.2,426.9 L1410.1,428.6 L1411.9,430.3 L1413.8,432.0 L1415.6,433.7 L1417.4,435.4 L1419.3,437.1 L1421.1,438.8 L1422.9,440.5 L1424.8,442.2 L1426.6,443.9 L1428.4,445.7 L1430.3,447.4 L1432.1,449.1 L1433.9,450.8 L1435.7,452.6 L1437.5,454.3 L1439.4,456.0 L1441.2,457.7 L1443.0,459.5 L1444.8,461.2 L1446.6,462.9 L1448.5,464.7 L1450.3,466.4 L1452.1,468.1 L1453.9,469.9 L1455.7,471.6 L1457.6,473.4 L1459.4,475.1 L1461.2,476.8 L1463.0,478.6 L1464.8,480.3 L1466.6,482.1 L1468.4,483.8 L1470.3,485.5 L1472.1,487.3 L1473.9,489.0"/>
<path d="M667.2,219.9 L669.5,221.0 L671.7,222.1 L674.0,223.2 L676.3,224.3 L678.5,225.4 L680.8,226.5 L683.1,227.6 L685.3,228.6 L687.6,229.7 L689.9,230.8 L692.1,231.9 L694.4,233.0 L696.7,234.1 L699.0,235.2 L701.2,236.3 L703.5,237.3 L705.8,238.4 L708.0,239.5 L710.3,240.6 L712.6,241.6 L714.9,242.7 L717.2,243.8 L719.4,244.9 L721.7,245.9 L724.0,247.0 L726.3,248.0 L728.6,249.1 L730.8,250.2 L733.1,251.2 L735.4,252.3 L737.7,253.3 L740.0,254.4 L742.3,255.4 L744.6,256.5 L746.9,257.5 L749.2,258.5 L751.4,259.6 L753.7,260.6 L756.0,261.6 L758.3,262.7 L760.6,263.7 L762.9,264.7 L765.2,265.8 L767.5,266.8 L769.8,267.8 L772.1,268.8 L774.4,269.8 L776.7,270.9 L779.0,271.9 L781.3,272.9 L783.6,273.9 L785.9,274.9 L788.2,275.9 L790.6,276.9 L792.9,277.9 L795.2,278.9 L797.5,279.9 L799.8,280.9 L802.1,281.9 L804.4,282.9 L806.7,283.9 L809.0,284.9 L811.3,285.9 L813.7,286.9 L816.0,287.9 L818.3,288.9 L820.6,289.8 L822.9,290.8 L825.2,291.8 L827.6,292.8 L829.9,293.8 L832.2,294.8 L834.5,295.7 L836.8,296.7 L839.1,297.7 L841.5,298.7 L843.8,299.6 L846.1,300.6 L848.4,301.6 L850.7,302.6 L853.1,303.6 L855.4,304.5 L857.7,305.5 L860.0,306.5 L862.3,307.5 L864.7,308.4 L867.0,309.4 L869.3,310.4 L871.6,311.4 L874.0,312.3 L876.3,313.3 L878.6,314.3 L880.9,315.2 L883.2,316.2 L885.6,317.2 L887.9,318.2 L890.2,319.1 L892.5,320.1 L894.9,321.1 L897.2,322.0 L899.5,323.0 L901.9,324.0 L904.2,324.9 L906.5,325.9 L908.8,326.8 L911.2,327.8 L913.5,328.7 L915.9,329.7 L918.2,330.6 L920.5,331.5 L922.9,332.5 L925.2,333.4 L927.5,334.3 L929.9,335.2 L932.2,336.1 L934.6,337.0 L936.9,337.9 L939.3,338.8 L941.6,339.7 L944.0,340.5 L946.4,341.4 L948.7,342.3 L951.1,343.1 L953.5,343.9 L955.8,344.8 L958.2,345.6 L960.6,346.4 L962.9,347.2 L965.3,348.1 L967.7,348.9 L970.1,349.7 L972.5,350.5 L974.8,351.3 L977.2,352.1 L979.6,352.9 L982.0,353.7 L984.4,354.5 L986.8,355.3 L989.2,356.1 L991.6,356.9 L994.0,357.7 L996.4,358.5 L998.8,359.3 L1001.2,360.1 L1003.6,360.9 L1006.0,361.6 L1008.5,362.3 L1010.9,363.0 L1013.4,363.6 L1015.8,364.1 L1018.3,364.7 L1020.8,365.1 L1023.2,365.5 L1025.7,365.8 L1028.3,366.0 L1030.8,366.2 L1033.3,366.2 L1035.9,366.2 L1038.5,366.0 L1041.0,365.8 L1043.6,365.4 L1046.1,364.9 L1048.6,364.3 L1051.0,363.6 L1053.4,362.8 L1055.7,361.8 L1058.0,360.7 L1060.1,359.5 L1062.2,358.1 L1064.3,356.6 L1066.2,355.0 L1068.1,353.3 L1069.9,351.5 L1071.6,349.6 L1073.3,347.7 L1074.9,345.7 L1076.4,343.7 L1077.9,341.6 L1079.3,339.5 L1080.6,337.3 L1081.8,335.1 L1082.9,332.8 L1083.9,330.5 L1084.7,328.2 L1085.5,325.8 L1086.2,323.3 L1086.8,320.9 L1087.4,318.5 L1088.0,316.0"/>
<path d="M629.7,275.7 L631.9,276.9 L634.2,278.0 L636.4,279.2 L638.6,280.4 L640.9,281.5 L643.1,282.7 L645.3,283.8 L647.6,285.0 L649.8,286.2 L652.1,287.3 L654.3,288.4 L656.5,289.6 L658.8,290.7 L661.0,291.8 L663.3,292.9 L665.6,294.0 L667.8,295.1 L670.1,296.2 L672.4,297.3 L674.7,298.4 L676.9,299.5 L679.2,300.5 L681.5,301.6 L683.8,302.6 L686.1,303.7 L688.4,304.7 L690.7,305.7 L693.0,306.8 L695.3,307.8 L697.6,308.8 L699.9,309.8 L702.2,310.8 L704.5,311.9 L706.8,312.9 L709.1,313.9 L711.4,314.9 L713.7,315.9 L716.0,316.9 L718.4,317.9 L720.7,318.9 L723.0,319.9 L725.3,320.9 L727.6,321.9 L729.9,322.8 L732.2,323.8 L734.6,324.8 L736.9,325.8 L739.2,326.8 L741.5,327.8 L743.8,328.8 L746.1,329.8 L748.4,330.8 L750.7,331.8 L753.1,332.8 L755.4,333.8 L757.7,334.8 L760.0,335.8 L762.3,336.8 L764.6,337.8 L766.9,338.8 L769.2,339.8 L771.5,340.8 L773.8,341.8 L776.1,342.8 L778.4,343.8 L780.7,344.9 L783.0,345.9 L785.3,346.9 L787.7,347.9 L790.0,348.9 L792.3,349.9 L794.6,350.9 L796.9,352.0 L799.2,353.0 L801.5,354.0 L803.8,355.0 L806.1,356.0 L808.4,357.1 L810.7,358.1 L813.0,359.1 L815.3,360.1 L817.6,361.1 L819.9,362.2 L822.2,363.2 L824.5,364.2 L826.8,365.2 L829.1,366.2 L831.4,367.2 L833.7,368.3 L836.0,369.3 L838.3,370.3 L840.6,371.3 L843.0,372.3 L845.3,373.3 L847.6,374.4 L849.9,375.4 L852.2,376.4 L854.5,377.4 L856.8,378.4 L859.2,379.4 L861.5,380.4 L863.8,381.4 L866.1,382.4 L868.4,383.4 L870.8,384.3 L873.1,385.3 L875.4,386.3 L877.8,387.3 L880.1,388.2 L882.4,389.2 L884.8,390.1 L887.1,391.1 L889.4,392.0 L891.8,392.9 L894.1,393.9 L896.5,394.8 L898.8,395.7 L901.2,396.6 L903.5,397.5 L905.9,398.3 L908.3,399.2 L910.6,400.1 L913.0,400.9 L915.4,401.8 L917.7,402.6 L920.1,403.4 L922.5,404.2 L924.9,405.0 L927.3,405.8 L929.7,406.6 L932.1,407.4 L934.5,408.1 L936.9,408.9 L939.3,409.6 L941.7,410.3 L944.1,411.0 L946.5,411.7 L948.9,412.4 L951.4,413.0 L953.8,413.7 L956.2,414.3 L958.7,414.9 L961.1,415.6 L963.6,416.2 L966.0,416.7 L968.4,417.3 L970.9,417.9 L973.4,418.4 L975.8,419.0 L978.3,419.5 L980.7,420.1 L983.2,420.6 L985.7,421.1 L988.2,421.6 L990.6,422.1 L993.1,422.6 L995.6,423.1 L998.1,423.6 L1000.5,424.0 L1003.0,424.5 L1005.5,424.8 L1008.0,425.2 L1010.5,425.5 L1013.0,425.8 L1015.5,426.0 L1018.0,426.2 L1020.6,426.3 L1023.1,426.4 L1025.6,426.4 L1028.1,426.3 L1030.7,426.2 L1033.2,426.0 L1035.7,425.7 L1038.3,425.3 L1040.8,424.9 L1043.3,424.4 L1045.7,423.9 L1048.2,423.3 L1050.6,422.6 L1053.0,421.8 L1055.4,420.9 L1057.7,420.0 L1060.0,419.0 L1062.3,418.0 L1064.5,416.8 L1066.7,415.7 L1068.9,414.4 L1071.0,413.1 L1073.2,411.8 L1075.3,410.4 L1077.4,409.0 L1079.5,407.6 L1081.6,406.1 L1083.6,404.6 L1085.7,403.0 L1087.7,401.5 L1089.8,399.9 L1091.8,398.3 L1093.8,396.7 L1095.8,395.1 L1097.7,393.4 L1099.6,391.7 L1101.5,390.0 L1103.3,388.2 L1105.0,386.4 L1106.6,384.5 L1108.2,382.5 L1109.7,380.5 L1111.0,378.5 L1112.3,376.3 L1113.5,374.1 L1114.6,371.9 L1115.6,369.6 L1116.5,367.2 L1117.4,364.8 L1118.2,362.4 L1119.0,360.0 L1119.7,357.6 L1120.5,355.1 L1121.2,352.7 L1121.9,350.3 L1122.6,347.9 L1123.4,345.4 L1124.1,343.0 L1124.8,340.6 L1125.5,338.2 L1126.2,335.8 L1126.9,333.4"/>
<path d="M811,295.4 L782.6,409 C781,418 785,427 792,427.3 C796,427.5 799,425 803,420.5 L871.2,322.3"/>
<path d="M1107.6,365.4 L1110.1,365.8 L1112.5,366.3 L1115.0,366.7 L1117.5,367.1 L1120.0,367.6 L1122.4,368.0 L1124.9,368.4 L1127.4,368.9 L1129.8,369.3 L1132.3,369.8 L1134.8,370.3 L1137.2,370.7 L1139.7,371.2 L1142.2,371.7 L1144.6,372.2 L1147.1,372.7 L1149.5,373.2 L1152.0,373.7 L1154.4,374.3 L1156.9,374.8 L1159.3,375.4 L1161.8,376.0 L1164.2,376.6 L1166.6,377.2 L1169.1,377.8 L1171.5,378.4 L1173.9,379.1 L1176.3,379.7 L1178.8,380.4 L1181.2,381.1 L1183.6,381.8 L1186.0,382.5 L1188.4,383.2 L1190.8,383.9 L1193.2,384.6 L1195.6,385.4 L1198.0,386.1 L1200.4,386.8 L1202.8,387.6 L1205.2,388.3 L1207.6,389.0 L1210.0,389.8 L1212.4,390.5 L1214.8,391.2 L1217.2,392.0 L1219.6,392.8 L1222.0,393.6 L1224.3,394.6 L1226.6,395.6 L1228.9,396.7 L1231.0,397.9 L1233.2,399.2 L1235.2,400.7 L1237.2,402.2 L1239.1,403.9 L1240.9,405.7 L1242.6,407.6 L1244.1,409.6 L1245.6,411.8 L1246.8,414.0 L1247.9,416.3 L1248.7,418.7 L1249.3,421.2 L1249.6,423.7 L1249.6,426.2 L1249.3,428.7 L1248.8,431.1 L1248.0,433.5 L1247.0,435.8 L1245.9,438.1 L1244.8,440.4 L1243.6,442.6 L1242.2,444.7 L1240.7,446.7 L1239.0,448.5 L1237.2,450.2 L1235.2,451.8 L1233.1,453.2 L1231.0,454.6 L1228.9,456.0 L1226.8,457.3 L1224.6,458.6 L1222.5,459.9 L1220.3,461.2 L1218.2,462.4 L1216.0,463.7 L1213.8,465.0 L1211.6,466.2 L1209.5,467.4 L1207.3,468.7 L1205.1,469.9 L1202.8,471.1 L1200.6,472.3 L1198.4,473.5 L1196.2,474.6 L1193.9,475.8 L1191.7,476.9 L1189.4,478.0 L1187.2,479.1 L1184.9,480.2 L1182.6,481.3 L1180.3,482.3 L1178.0,483.3 L1175.7,484.3 L1173.4,485.3 L1171.1,486.2 L1168.7,487.1 L1166.4,488.0 L1164.0,488.8 L1161.7,489.6 L1159.3,490.4 L1156.9,491.2 L1154.5,491.9 L1152.1,492.6 L1149.7,493.3 L1147.3,494.0 L1144.8,494.6 L1142.4,495.2 L1140.0,495.8 L1137.5,496.4 L1135.1,496.9 L1132.6,497.5 L1130.2,498.0 L1127.7,498.5 L1125.2,499.0 L1122.8,499.5 L1120.3,499.9 L1117.8,500.4 L1115.3,500.8 L1112.9,501.3 L1110.4,501.7 L1107.9,502.1 L1105.4,502.5 L1102.9,502.9 L1100.4,503.3 L1097.9,503.7 L1095.5,504.1 L1093.0,504.5 L1090.5,504.9 L1088.0,505.3 L1085.5,505.7 L1083.1,506.0 L1080.6,506.4 L1078.1,506.8 L1075.6,507.1 L1073.1,507.5 L1070.6,507.8 L1068.2,508.2 L1065.7,508.5 L1063.2,508.8 L1060.7,509.1 L1058.2,509.4 L1055.7,509.7 L1053.2,510.0 L1050.7,510.3 L1048.2,510.5 L1045.7,510.8 L1043.2,511.0 L1040.7,511.2 L1038.2,511.4 L1035.7,511.7 L1033.2,511.8 L1030.7,512.0 L1028.2,512.2 L1025.7,512.4 L1023.2,512.6 L1020.7,512.8 L1018.2,513.0 L1015.7,513.2 L1013.2,513.4 L1010.7,513.6 L1008.2,513.8 L1005.7,514.1 L1003.2,514.4 L1000.7,514.7 L998.2,515.0 L995.7,515.4 L993.3,515.7 L990.8,516.2 L988.3,516.6 L985.9,517.1 L983.4,517.6 L981.0,518.2 L978.5,518.8 L976.1,519.4 L973.7,520.0 L971.3,520.7 L968.9,521.5 L966.5,522.2 L964.1,523.0 L961.7,523.8 L959.3,524.6 L957.0,525.5 L954.6,526.4 L952.3,527.3 L949.9,528.2 L947.6,529.2 L945.3,530.2 L943.0,531.2 L940.8,532.3 L938.5,533.4 L936.2,534.5 L934.0,535.6 L931.8,536.8 L929.6,538.0 L927.4,539.2 L925.2,540.5 L923.0,541.8 L920.9,543.1 L918.8,544.4 L916.7,545.8 L914.6,547.3 L912.6,548.7 L910.6,550.2 L908.6,551.7 L906.6,553.3 L904.7,554.9 L902.8,556.6 L900.9,558.3 L899.1,560.0 L897.3,561.8 L895.6,563.6 L893.8,565.4 L892.2,567.3 L890.5,569.1 L888.9,571.1 L887.3,573.0 L885.7,575.0 L884.2,577.0 L882.7,579.0 L881.3,581.0 L879.8,583.1 L878.4,585.1 L876.9,587.2 L875.5,589.2 L874.1,591.3 L872.7,593.4 L871.3,595.5 L869.8,597.5 L868.4,599.6 L867.0,601.7 L865.6,603.8 L864.2,605.8 L862.8,607.9 L861.4,610.0 L860.0,612.1 L858.6,614.2 L857.3,616.3 L855.9,618.4 L854.6,620.5 L853.2,622.6 L851.9,624.8 L850.6,626.9 L849.3,629.1 L848.0,631.2 L846.7,633.4 L845.4,635.5 L844.1,637.7 L842.8,639.8 L841.5,642.0 L840.2,644.1 L838.9,646.2 L837.6,648.4 L836.3,650.5 L835.0,652.7 L833.7,654.8 L832.4,657.0 L831.1,659.1 L829.8,661.3 L828.5,663.4 L827.2,665.6 L825.9,667.7 L824.6,669.9 L823.4,672.1 L822.1,674.2 L820.9,676.4 L819.7,678.6 L818.5,680.8 L817.3,683.0 L816.1,685.2 L814.9,687.4 L813.8,689.7 L812.7,691.9 L811.5,694.1 L810.4,696.4 L809.3,698.6 L808.2,700.9 L807.2,703.2 L806.1,705.4 L805.0,707.7 L803.9,710.0 L802.9,712.2 L801.8,714.5 L800.8,716.8 L799.7,719.1 L798.7,721.4 L797.6,723.7 L796.6,725.9 L795.6,728.2 L794.5,730.5"/>
<path d="M1249.8,430.2 L1249.8,432.7 L1249.7,435.3 L1249.4,437.8 L1248.9,440.2 L1248.2,442.7 L1247.3,445.0 L1246.1,447.2 L1244.7,449.4 L1243.2,451.4 L1241.6,453.4 L1239.9,455.2 L1238.2,457.1 L1236.4,458.8 L1234.5,460.5 L1232.7,462.3 L1230.8,464.0 L1228.9,465.6 L1226.9,467.2 L1225.0,468.7 L1222.9,470.2 L1220.9,471.6 L1218.8,473.0 L1216.6,474.3 L1214.5,475.5 L1212.3,476.8 L1210.1,478.0 L1207.8,479.1 L1205.6,480.3 L1203.3,481.4 L1201.0,482.4 L1198.7,483.5 L1196.3,484.5 L1194.0,485.5 L1191.6,486.4 L1189.3,487.4 L1186.9,488.4 L1184.5,489.3 L1182.1,490.2 L1179.7,491.2 L1177.4,492.1 L1175.0,493.0 L1172.6,493.9 L1170.2,494.9 L1167.9,495.8 L1165.5,496.8 L1163.1,497.7 L1160.8,498.6 L1158.4,499.6 L1156.1,500.5 L1153.7,501.5 L1151.4,502.4 L1149.0,503.3 L1146.7,504.3 L1144.3,505.2 L1142.0,506.1 L1139.6,507.0 L1137.3,507.9 L1134.9,508.8 L1132.6,509.7 L1130.2,510.6 L1127.9,511.5 L1125.5,512.4 L1123.2,513.2 L1120.8,514.1 L1118.5,514.9 L1116.1,515.7 L1113.7,516.5 L1111.3,517.3 L1109.0,518.1 L1106.6,518.9 L1104.2,519.6 L1101.8,520.4 L1099.4,521.1 L1097.0,521.8 L1094.6,522.5 L1092.1,523.1 L1089.7,523.8 L1087.3,524.4 L1084.8,525.0 L1082.4,525.6 L1079.9,526.2 L1077.5,526.8 L1075.0,527.4 L1072.6,527.9 L1070.1,528.5 L1067.6,529.0 L1065.2,529.5 L1062.7,530.1 L1060.2,530.6 L1057.7,531.1 L1055.3,531.5 L1052.8,532.0 L1050.3,532.5 L1047.8,533.0 L1045.3,533.4 L1042.8,533.9 L1040.4,534.3 L1037.9,534.8 L1035.4,535.2 L1032.9,535.7 L1030.4,536.1 L1027.9,536.5 L1025.4,537.0 L1023.0,537.4 L1020.5,537.8 L1018.0,538.2 L1015.5,538.6 L1013.0,539.0 L1010.5,539.4 L1008.0,539.8 L1005.5,540.2 L1003.1,540.5 L1000.6,540.9 L998.1,541.3 L995.6,541.6 L993.1,541.9 L990.6,542.3 L988.1,542.6 L985.6,542.9 L983.1,543.2 L980.6,543.5 L978.1,543.9 L975.6,544.2 L973.1,544.5 L970.6,544.8 L968.1,545.1 L965.6,545.4 L963.1,545.7 L960.6,546.1 L958.1,546.4 L955.6,546.8 L953.1,547.2 L950.6,547.6 L948.1,548.1 L945.6,548.5 L943.1,549.1 L940.7,549.6 L938.2,550.2 L935.8,550.9 L933.4,551.6 L931.0,552.4 L928.6,553.3 L926.3,554.2 L924.0,555.2 L921.7,556.3 L919.4,557.4 L917.2,558.6 L915.0,559.8 L912.8,561.1 L910.7,562.4 L908.6,563.8 L906.5,565.2 L904.4,566.7 L902.4,568.2 L900.4,569.8 L898.5,571.4 L896.5,573.0 L894.6,574.6 L892.7,576.3 L890.8,577.9 L889.0,579.6 L887.1,581.4 L885.3,583.1 L883.5,584.9 L881.7,586.6 L879.9,588.4 L878.2,590.3 L876.5,592.1 L874.8,594.0 L873.1,595.9 L871.5,597.8 L869.8,599.7 L868.2,601.7 L866.7,603.6 L865.1,605.6 L863.6,607.7 L862.1,609.7 L860.7,611.7 L859.2,613.8 L857.8,615.9 L856.3,617.9 L854.9,620.0"/>
<path d="M97.0,574.0 L99.4,574.7 L101.8,575.3 L104.3,576.0 L106.7,576.7 L109.1,577.3 L111.5,578.0 L113.9,578.7 L116.3,579.3 L118.8,580.0 L121.2,580.6 L123.6,581.3 L126.0,581.9 L128.5,582.6 L130.9,583.2 L133.3,583.8 L135.7,584.4 L138.2,585.0 L140.6,585.6 L143.1,586.2 L145.5,586.8 L147.9,587.3 L150.4,587.9 L152.8,588.4 L155.3,589.0 L157.7,589.5 L160.2,590.0 L162.6,590.6 L165.1,591.1 L167.5,591.6 L170.0,592.1 L172.4,592.6 L174.9,593.1 L177.4,593.6 L179.8,594.1 L182.3,594.6 L184.7,595.1 L187.2,595.6 L189.7,596.0 L192.1,596.5 L194.6,597.0 L197.1,597.4 L199.5,597.9 L202.0,598.3 L204.5,598.8 L206.9,599.2 L209.4,599.6 L211.9,600.1 L214.3,600.5 L216.8,600.9 L219.3,601.3 L221.8,601.7 L224.3,602.1 L226.7,602.5 L229.2,602.8 L231.7,603.2 L234.2,603.6 L236.7,603.9 L239.1,604.3 L241.6,604.6 L244.1,605.0 L246.6,605.3 L249.1,605.6 L251.6,605.9 L254.1,606.2 L256.5,606.5 L259.0,606.8 L261.5,607.1 L264.0,607.4 L266.5,607.7 L269.0,607.9 L271.5,608.2 L274.0,608.5 L276.5,608.7 L279.0,609.0 L281.5,609.2 L284.0,609.4 L286.5,609.7 L289.0,609.9 L291.5,610.1 L294.0,610.3 L296.5,610.5 L299.0,610.7 L301.5,610.9 L304.0,611.1 L306.5,611.2 L309.0,611.4 L311.5,611.5 L314.0,611.7 L316.5,611.8 L319.0,612.0 L321.5,612.1 L324.0,612.2 L326.5,612.3 L329.0,612.4 L331.5,612.5 L334.0,612.6 L336.5,612.6 L339.0,612.7 L341.6,612.7 L344.1,612.8 L346.6,612.8 L349.1,612.8 L351.6,612.8 L354.1,612.8 L356.6,612.8 L359.1,612.8 L361.6,612.7 L364.1,612.7 L366.6,612.7 L369.1,612.6 L371.6,612.5 L374.1,612.5 L376.7,612.4 L379.2,612.3 L381.7,612.2 L384.2,612.2 L386.7,612.1 L389.2,612.0 L391.7,611.9 L394.2,611.8 L396.7,611.7 L399.2,611.6 L401.7,611.5 L404.2,611.4 L406.7,611.3 L409.2,611.1 L411.7,611.0 L414.2,610.9 L416.7,610.8 L419.2,610.7 L421.7,610.5 L424.3,610.4 L426.8,610.3 L429.3,610.1 L431.8,610.0 L434.3,609.9 L436.8,609.7 L439.3,609.6 L441.8,609.5 L444.3,609.3 L446.8,609.2 L449.3,609.1 L451.8,608.9 L454.3,608.8 L456.8,608.7 L459.3,608.5 L461.8,608.4 L464.3,608.2 L466.8,608.1 L469.3,608.0 L471.8,607.8 L474.3,607.7 L476.8,607.6 L479.3,607.4 L481.8,607.3 L484.3,607.2 L486.9,607.1 L489.4,606.9 L491.9,606.8 L494.4,606.7 L496.9,606.6 L499.4,606.4 L501.9,606.3 L504.4,606.2 L506.9,606.1 L509.4,606.0 L511.9,605.9 L514.4,605.7 L516.9,605.6 L519.4,605.5 L521.9,605.4 L524.4,605.3 L526.9,605.2 L529.4,605.1 L531.9,605.0 L534.4,604.9 L536.9,604.8 L539.5,604.7 L542.0,604.6 L544.5,604.5 L547.0,604.4 L549.5,604.3 L552.0,604.2 L554.5,604.2 L557.0,604.1 L559.5,604.0 L562.0,603.9 L564.5,603.8 L567.0,603.8 L569.5,603.7 L572.0,603.7 L574.5,603.6 L577.0,603.5 L579.6,603.5 L582.1,603.4 L584.6,603.4 L587.1,603.4 L589.6,603.3 L592.1,603.3 L594.6,603.3 L597.1,603.2 L599.6,603.2 L602.1,603.2 L604.6,603.2 L607.1,603.2 L609.6,603.2 L612.1,603.2 L614.7,603.2 L617.2,603.2 L619.7,603.2 L622.2,603.2 L624.7,603.3 L627.2,603.3 L629.7,603.3 L632.2,603.3 L634.7,603.4 L637.2,603.4 L639.7,603.5 L642.2,603.5 L644.7,603.6 L647.3,603.7 L649.8,603.7 L652.3,603.8 L654.8,603.9 L657.3,604.0 L659.8,604.1 L662.3,604.2 L664.8,604.3 L667.3,604.4 L669.8,604.6 L672.3,604.7 L674.8,604.9 L677.3,605.0 L679.8,605.2 L682.3,605.4 L684.8,605.6 L687.3,605.8 L689.8,606.0 L692.3,606.2 L694.8,606.4 L697.3,606.6 L699.8,606.9 L702.3,607.1 L704.8,607.4 L707.3,607.6 L709.8,607.9 L712.3,608.2 L714.8,608.4 L717.3,608.7 L719.7,609.0 L722.2,609.3 L724.7,609.6 L727.2,609.8 L729.7,610.1 L732.2,610.4 L734.7,610.7 L737.2,611.0 L739.7,611.3 L742.2,611.6 L744.7,611.9 L747.2,612.1 L749.6,612.4 L752.1,612.7 L754.6,613.0 L757.1,613.3 L759.6,613.5 L762.1,613.8 L764.6,614.0 L767.1,614.3 L769.6,614.5 L772.1,614.8 L774.6,615.0 L777.1,615.2 L779.6,615.5 L782.1,615.7 L784.6,615.9 L787.1,616.1 L789.6,616.3 L792.1,616.4 L794.6,616.6 L797.1,616.8 L799.6,616.9 L802.1,617.1 L804.6,617.2 L807.1,617.3 L809.6,617.5 L812.1,617.6 L814.6,617.7 L817.1,617.8 L819.6,617.9 L822.1,618.0 L824.6,618.1 L827.1,618.2 L829.6,618.2 L832.2,618.3 L834.7,618.4 L837.2,618.4 L839.7,618.5 L842.2,618.5 L844.7,618.6 L847.2,618.6 L849.7,618.6 L852.2,618.7 L854.7,618.7 L857.3,618.7 L859.8,618.7 L862.3,618.6 L864.8,618.6 L867.3,618.6 L869.8,618.5 L872.3,618.4 L874.8,618.3 L877.3,618.2 L879.8,618.1 L882.3,618.0 L884.8,617.8 L887.3,617.6 L889.8,617.4 L892.3,617.2 L894.8,617.0 L897.3,616.7 L899.8,616.5 L902.3,616.2 L904.8,615.9 L907.3,615.6 L909.7,615.3 L912.2,615.0 L914.7,614.7 L917.2,614.4 L919.7,614.1 L922.2,613.8 L924.7,613.4 L927.2,613.1 L929.7,612.8 L932.1,612.5 L934.6,612.2 L937.1,611.8 L939.6,611.5 L942.1,611.2 L944.6,611.0 L947.1,610.7 L949.6,610.4 L952.1,610.1 L954.6,609.9 L957.1,609.6 L959.6,609.4 L962.1,609.1 L964.6,608.9 L967.1,608.7 L969.6,608.4 L972.1,608.2 L974.6,607.9 L977.1,607.7 L979.5,607.4 L982.0,607.1 L984.5,606.9 L987.0,606.6 L989.5,606.3 L992.0,606.0 L994.5,605.7 L997.0,605.3 L999.4,605.0 L1001.9,604.6 L1004.4,604.2 L1006.9,603.8 L1009.3,603.4 L1011.8,603.0 L1014.3,602.6 L1016.7,602.1 L1019.2,601.7 L1021.7,601.2 L1024.1,600.8 L1026.6,600.3 L1029.1,599.8 L1031.5,599.3 L1034.0,598.8 L1036.4,598.3 L1038.9,597.9 L1041.4,597.4 L1043.8,596.9 L1046.3,596.4 L1048.7,595.9 L1051.2,595.4 L1053.7,594.9 L1056.1,594.5 L1058.6,594.0 L1061.1,593.5 L1063.5,593.1 L1066.0,592.6 L1068.5,592.2 L1071.0,591.8 L1073.4,591.4 L1075.9,590.9 L1078.4,590.5 L1080.8,590.1 L1083.3,589.7 L1085.8,589.3 L1088.3,588.9 L1090.7,588.4 L1093.2,588.0 L1095.7,587.6 L1098.2,587.2 L1100.6,586.7 L1103.1,586.3 L1105.6,585.8 L1108.0,585.3 L1110.5,584.9 L1112.9,584.4 L1115.4,583.9 L1117.8,583.4 L1120.3,582.8 L1122.7,582.3 L1125.2,581.7 L1127.6,581.1 L1130.0,580.5 L1132.5,579.9 L1134.9,579.3 L1137.3,578.7 L1139.8,578.1 L1142.2,577.4 L1144.6,576.7 L1147.0,576.1 L1149.4,575.4 L1151.9,574.7 L1154.3,574.0 L1156.7,573.3 L1159.1,572.6 L1161.5,571.9 L1163.9,571.2 L1166.3,570.5 L1168.7,569.8 L1171.1,569.0 L1173.5,568.3 L1175.9,567.6 L1178.3,566.8 L1180.7,566.1 L1183.1,565.4 L1185.5,564.6 L1187.9,563.9 L1190.3,563.1 L1192.7,562.4 L1195.0,561.6 L1197.4,560.9 L1199.8,560.1 L1202.2,559.4 L1204.6,558.6 L1207.0,557.8 L1209.4,557.0 L1211.7,556.3 L1214.1,555.5 L1216.5,554.7 L1218.9,553.9 L1221.3,553.1 L1223.6,552.3 L1226.0,551.5 L1228.4,550.7 L1230.8,549.8 L1233.1,549.0 L1235.5,548.2 L1237.9,547.4 L1240.2,546.5 L1242.6,545.7 L1245.0,544.8 L1247.4,544.0 L1249.7,543.1 L1252.1,542.2 L1254.4,541.3 L1256.8,540.4 L1259.1,539.5 L1261.5,538.6 L1263.8,537.7 L1266.2,536.7 L1268.5,535.8 L1270.8,534.8 L1273.1,533.8 L1275.4,532.8 L1277.7,531.7 L1280.0,530.7 L1282.2,529.6 L1284.5,528.5 L1286.7,527.4 L1289.0,526.3 L1291.2,525.1 L1293.4,524.0 L1295.6,522.7 L1297.8,521.5 L1299.9,520.3 L1302.1,519.0 L1304.2,517.6 L1306.3,516.3 L1308.4,514.9 L1310.5,513.6 L1312.6,512.2 L1314.6,510.7 L1316.7,509.3 L1318.7,507.8 L1320.8,506.4 L1322.8,504.9 L1324.8,503.4 L1326.8,501.9 L1328.8,500.3 L1330.8,498.8 L1332.8,497.3 L1334.8,495.7 L1336.8,494.2 L1338.7,492.6 L1340.7,491.1 L1342.7,489.5 L1344.7,488.0 L1346.6,486.4 L1348.6,484.8 L1350.5,483.2 L1352.4,481.6 L1354.3,480.0 L1356.2,478.4 L1358.1,476.7 L1360.0,475.1 L1361.9,473.4 L1363.7,471.7 L1365.5,470.0 L1367.3,468.2 L1369.1,466.4 L1370.9,464.6 L1372.6,462.8 L1374.3,460.9 L1376.0,459.0 L1377.6,457.1 L1379.2,455.2 L1380.8,453.2 L1382.3,451.2 L1383.8,449.1 L1385.2,447.1 L1386.5,445.0 L1387.8,442.8 L1389.1,440.6 L1390.2,438.4 L1391.3,436.2 L1392.4,433.9 L1393.4,431.6 L1394.3,429.3 L1395.2,426.9 L1396.1,424.6 L1397.0,422.2 L1397.9,419.9 L1398.8,417.5 L1399.6,415.2 L1400.5,412.8 L1401.3,410.4 L1402.1,408.0 L1402.8,405.6 L1403.5,403.2 L1404.1,400.8 L1404.7,398.4 L1405.2,395.9 L1405.7,393.5 L1406.1,391.0 L1406.5,388.5 L1406.9,386.0 L1407.3,383.6 L1407.7,381.1 L1408.0,378.6 L1408.4,376.1"/>
<path d="M526.8,605.2 L529.3,605.2 L531.8,605.2 L534.3,605.3 L536.8,605.3 L539.3,605.4 L541.8,605.5 L544.3,605.6 L546.9,605.7 L549.4,605.8 L551.9,605.9 L554.4,606.1 L556.9,606.2 L559.4,606.4 L561.9,606.6 L564.4,606.8 L566.9,607.0 L569.4,607.2 L571.9,607.4 L574.4,607.6 L576.9,607.8 L579.4,608.0 L581.9,608.3 L584.4,608.5 L586.9,608.8 L589.4,609.0 L591.9,609.3 L594.4,609.5 L596.9,609.8 L599.4,610.0 L601.9,610.3 L604.4,610.5 L606.9,610.8 L609.4,611.1 L611.9,611.3 L614.4,611.6 L616.9,611.8 L619.3,612.1 L621.8,612.3 L624.3,612.6 L626.8,612.8 L629.3,613.0 L631.8,613.3 L634.3,613.5 L636.8,613.7 L639.3,614.0 L641.8,614.2 L644.3,614.4 L646.8,614.6 L649.3,614.8 L651.8,615.0 L654.3,615.2 L656.8,615.4 L659.3,615.6 L661.8,615.8 L664.3,616.0 L666.8,616.2 L669.3,616.4 L671.8,616.7 L674.3,616.9 L676.8,617.1 L679.3,617.3 L681.8,617.6 L684.3,617.8 L686.8,618.1 L689.3,618.3 L691.8,618.6 L694.3,618.9 L696.8,619.2 L699.3,619.4 L701.8,619.7 L704.3,620.0 L706.7,620.3 L709.2,620.6 L711.7,621.0 L714.2,621.3 L716.7,621.6 L719.2,621.9 L721.7,622.3 L724.2,622.6 L726.6,623.0 L729.1,623.3 L731.6,623.7 L734.1,624.0 L736.6,624.4 L739.1,624.7 L741.5,625.1 L744.0,625.5 L746.5,625.9 L749.0,626.3 L751.5,626.6 L753.9,627.0 L756.4,627.4 L758.9,627.8 L761.4,628.2 L763.9,628.6 L766.3,629.0 L768.8,629.4 L771.3,629.8 L773.8,630.3 L776.2,630.7 L778.7,631.1 L781.2,631.5 L783.7,631.9 L786.1,632.3 L788.6,632.8 L791.1,633.2 L793.6,633.6 L796.0,634.0 L798.5,634.4 L801.0,634.9 L803.5,635.3 L805.9,635.7 L808.4,636.1 L810.9,636.5 L813.4,636.9 L815.8,637.3 L818.3,637.7 L820.8,638.1 L823.3,638.4 L825.8,638.8 L828.3,639.2 L830.7,639.5 L833.2,639.9 L835.7,640.2 L838.2,640.5 L840.7,640.8 L843.2,641.1 L845.7,641.4 L848.1,641.7 L850.6,642.0 L853.1,642.2 L855.6,642.4 L858.1,642.7 L860.6,642.9 L863.1,643.1 L865.6,643.3 L868.1,643.5 L870.6,643.6 L873.1,643.8 L875.6,643.9 L878.2,644.0 L880.7,644.2 L883.2,644.3 L885.7,644.4 L888.2,644.4 L890.7,644.5 L893.2,644.6 L895.7,644.6 L898.2,644.7 L900.7,644.7 L903.3,644.7 L905.8,644.7 L908.3,644.7 L910.8,644.7 L913.3,644.7 L915.8,644.6 L918.3,644.6 L920.8,644.5 L923.3,644.5 L925.9,644.4 L928.4,644.3 L930.9,644.2 L933.4,644.1 L935.9,644.0 L938.4,643.9 L940.9,643.7 L943.4,643.6 L945.9,643.4 L948.4,643.3 L950.9,643.1 L953.4,642.9 L955.9,642.7 L958.4,642.5 L960.9,642.3 L963.4,642.0 L965.9,641.8 L968.4,641.5 L970.9,641.3 L973.4,641.0 L975.9,640.7 L978.4,640.4 L980.9,640.1 L983.4,639.8 L985.9,639.5 L988.4,639.1 L990.9,638.8 L993.3,638.4 L995.8,638.1 L998.3,637.7 L1000.8,637.3 L1003.3,636.9 L1005.7,636.5 L1008.2,636.0 L1010.7,635.6 L1013.1,635.1 L1015.6,634.7 L1018.1,634.2 L1020.5,633.8 L1023.0,633.3 L1025.5,632.8 L1027.9,632.3 L1030.4,631.8 L1032.8,631.3 L1035.3,630.8 L1037.7,630.3 L1040.2,629.7 L1042.7,629.2 L1045.1,628.7 L1047.6,628.1 L1050.0,627.6 L1052.5,627.1 L1054.9,626.5 L1057.4,626.0 L1059.8,625.4 L1062.3,624.9 L1064.7,624.3 L1067.2,623.8 L1069.6,623.3 L1072.1,622.7 L1074.5,622.1 L1076.9,621.6 L1079.4,621.0 L1081.8,620.5 L1084.3,619.9 L1086.7,619.4 L1089.2,618.8 L1091.6,618.2 L1094.1,617.6 L1096.5,617.1 L1098.9,616.5 L1101.4,615.9 L1103.8,615.3 L1106.2,614.7 L1108.7,614.1 L1111.1,613.5 L1113.6,612.9 L1116.0,612.3 L1118.4,611.6 L1120.8,611.0 L1123.3,610.4 L1125.7,609.7 L1128.1,609.1 L1130.5,608.4 L1133.0,607.8 L1135.4,607.1 L1137.8,606.4 L1140.2,605.7 L1142.6,605.0 L1145.0,604.3 L1147.5,603.6 L1149.9,602.9 L1152.3,602.2 L1154.7,601.4 L1157.1,600.7 L1159.5,599.9 L1161.8,599.2 L1164.2,598.4 L1166.6,597.6 L1169.0,596.8 L1171.4,596.0 L1173.7,595.2 L1176.1,594.3 L1178.5,593.5 L1180.8,592.6 L1183.2,591.8 L1185.5,590.9 L1187.9,590.0 L1190.2,589.1 L1192.6,588.2 L1194.9,587.2 L1197.2,586.3 L1199.5,585.3 L1201.8,584.4 L1204.1,583.4 L1206.4,582.4 L1208.7,581.4 L1211.0,580.4 L1213.3,579.3 L1215.6,578.3 L1217.9,577.2 L1220.2,576.2 L1222.4,575.1 L1224.7,574.0 L1226.9,572.9 L1229.2,571.8 L1231.4,570.7 L1233.7,569.5 L1235.9,568.4 L1238.2,567.3 L1240.4,566.1 L1242.6,564.9 L1244.8,563.8 L1247.0,562.6 L1249.2,561.4 L1251.4,560.2 L1253.6,559.0 L1255.8,557.7 L1258.0,556.5 L1260.2,555.3 L1262.4,554.0 L1264.5,552.8 L1266.7,551.5 L1268.9,550.2 L1271.0,548.9 L1273.2,547.6 L1275.3,546.3 L1277.5,545.0 L1279.6,543.7 L1281.7,542.4 L1283.8,541.0 L1286.0,539.7 L1288.1,538.3 L1290.2,536.9 L1292.3,535.6 L1294.4,534.2 L1296.5,532.8 L1298.5,531.4 L1300.6,530.0 L1302.7,528.6 L1304.8,527.1 L1306.8,525.7 L1308.9,524.2 L1310.9,522.8 L1312.9,521.3 L1315.0,519.8 L1317.0,518.3 L1319.0,516.8 L1321.0,515.3 L1323.0,513.7 L1324.9,512.2 L1326.9,510.6 L1328.8,509.0 L1330.8,507.4 L1332.7,505.8 L1334.6,504.2 L1336.4,502.5 L1338.3,500.8 L1340.2,499.1 L1342.0,497.4 L1343.8,495.7 L1345.6,493.9 L1347.4,492.1 L1349.1,490.4 L1350.9,488.6 L1352.6,486.7 L1354.3,484.9 L1356.0,483.0 L1357.7,481.2 L1359.4,479.3 L1361.0,477.4 L1362.7,475.5 L1364.3,473.6 L1365.9,471.7 L1367.5,469.7 L1369.1,467.8 L1370.7,465.8 L1372.2,463.8 L1373.7,461.8 L1375.3,459.9 L1376.8,457.9 L1378.3,455.9 L1379.8,453.8 L1381.3,451.8 L1382.8,449.8 L1384.3,447.8 L1385.8,445.8"/>
<path d="M474.4,582 L473.5,629.3"/>
<path d="M503.4,582 L504.3,626"/>
<path d="M1116.9,566.3 L1119.2,597.2"/>
<path d="M1146.4,588 L1158.6,617.3"/>
<path d="M1087.5,318 L1084.3,329.1"/>
</g>
<g stroke="#a3161a">
<path d="M253.0,191.0 L252.3,193.4 L251.6,195.8 L250.9,198.2 L250.1,200.7 L249.4,203.1 L248.7,205.5 L248.0,207.9 L247.3,210.3 L246.6,212.7 L245.8,215.1 L245.1,217.6 L244.4,220.0 L243.6,222.4 L242.9,224.8 L242.2,227.2 L241.4,229.6 L240.7,232.0 L239.9,234.4 L239.2,236.8 L238.4,239.2 L237.6,241.6 L236.9,244.0 L236.1,246.4 L235.3,248.8 L234.5,251.2 L233.7,253.6 L232.9,256.0 L232.2,258.4 L231.4,260.8 L230.6,263.2 L229.8,265.5 L229.0,267.9 L228.2,270.3 L227.4,272.7 L226.6,275.1 L225.8,277.5 L225.0,279.9 L224.2,282.3 L223.4,284.7 L222.6,287.0 L221.8,289.4 L221.0,291.8 L220.2,294.2 L219.4,296.6 L218.6,299.0 L217.8,301.4 L217.0,303.8 L216.2,306.2 L215.5,308.6 L214.7,311.0 L213.9,313.4 L213.1,315.8 L212.4,318.2 L211.6,320.6 L210.8,323.0 L210.1,325.4 L209.3,327.8 L208.5,330.2 L207.8,332.6 L207.0,335.0 L206.2,337.4 L205.5,339.8 L204.7,342.2 L203.9,344.6 L203.1,347.0 L202.4,349.4 L201.6,351.8 L200.8,354.1 L200.0,356.5 L199.2,358.9 L198.4,361.3 L197.6,363.7 L196.8,366.1 L196.0,368.5 L195.2,370.9 L194.3,373.2 L193.5,375.6 L192.7,378.0 L191.8,380.4 L191.0,382.7 L190.1,385.1 L189.2,387.4 L188.3,389.8 L187.4,392.2 L186.5,394.5 L185.6,396.9 L184.7,399.2 L183.8,401.6 L182.9,403.9 L181.9,406.2 L181.0,408.6 L180.1,410.9 L179.1,413.2 L178.2,415.6 L177.2,417.9 L176.2,420.2 L175.3,422.6 L174.3,424.9 L173.4,427.2 L172.4,429.6 L171.5,431.9 L170.5,434.2 L169.6,436.6 L168.6,438.9 L167.7,441.2 L166.8,443.6 L165.8,445.9 L164.9,448.3 L164.0,450.6 L163.1,453.0 L162.3,455.3 L161.4,457.7 L160.6,460.1 L159.7,462.5 L158.9,464.9 L158.1,467.3 L157.4,469.7 L156.6,472.1 L155.9,474.5 L155.3,476.9 L154.6,479.4 L154.0,481.8 L153.4,484.3 L152.9,486.7 L152.4,489.2 L151.9,491.7 L151.5,494.2 L151.1,496.7 L150.8,499.2 L150.5,501.7 L150.2,504.2 L150.0,506.7 L149.8,509.2 L149.7,511.8 L149.6,514.3 L149.6,516.8 L149.6,519.3 L149.6,521.8 L149.7,524.4 L149.8,526.9 L150.0,529.4 L150.2,531.9 L150.4,534.4 L150.7,536.9 L151.0,539.4 L151.4,541.9 L151.7,544.4 L152.1,546.9 L152.5,549.4 L152.9,551.9 L153.3,554.4 L153.7,556.9 L154.2,559.3 L154.6,561.8 L155.0,564.3 L155.4,566.8 L155.9,569.3 L156.3,571.8 L156.7,574.2 L157.2,576.7 L157.6,579.2 L158.1,581.7 L158.6,584.1 L159.1,586.6 L159.6,589.1 L160.1,591.5 L160.7,594.0 L161.2,596.4 L161.8,598.9 L162.4,601.3 L163.0,603.8 L163.6,606.2 L164.3,608.7 L164.9,611.1 L165.5,613.5 L166.2,616.0 L166.9,618.4 L167.5,620.8 L168.2,623.3 L168.8,625.7 L169.5,628.1 L170.1,630.6 L170.8,633.0 L171.4,635.5 L172.1,637.9 L172.7,640.3 L173.3,642.8 L174.0,645.2 L174.6,647.6 L175.2,650.1 L175.8,652.5 L176.4,655.0 L177.1,657.4 L177.7,659.9 L178.3,662.3 L178.9,664.7 L179.5,667.2 L180.1,669.6 L180.7,672.1 L181.3,674.5 L182.0,677.0 L182.6,679.4 L183.2,681.8 L183.8,684.3 L184.4,686.7 L185.0,689.2 L185.7,691.6 L186.3,694.1 L186.9,696.5"/>
<path d="M190.2,382.3 L192.8,405.7 L210.9,389.4"/>
<path d="M152.3,414.7 L313.6,449.6"/>
<path d="M313.6,449.6 L315.9,450.6 L318.2,451.6 L320.5,452.6 L322.9,453.6 L325.2,454.6 L327.5,455.6 L329.8,456.6 L332.1,457.6 L334.4,458.6 L336.7,459.6 L339.0,460.6 L341.4,461.6 L343.7,462.7 L346.0,463.7 L348.3,464.7 L350.6,465.7 L352.9,466.7 L355.2,467.8 L357.5,468.8 L359.8,469.8 L362.1,470.9 L364.4,471.9 L366.7,473.0 L368.9,474.0 L371.2,475.1 L373.5,476.2 L375.8,477.3 L378.1,478.3 L380.3,479.4 L382.6,480.5 L384.9,481.6 L387.1,482.7 L389.4,483.8 L391.7,485.0 L393.9,486.1 L396.2,487.2 L398.4,488.3 L400.7,489.5 L402.9,490.6 L405.2,491.8 L407.4,492.9 L409.6,494.1 L411.9,495.3 L414.1,496.4 L416.3,497.6 L418.6,498.8 L420.8,500.0 L423.0,501.2 L425.2,502.4 L427.4,503.6 L429.6,504.9 L431.8,506.1 L434.0,507.4 L436.1,508.7 L438.2,510.1 L440.4,511.5 L442.4,512.9 L444.5,514.3 L446.6,515.8 L448.6,517.4 L450.5,519.0 L452.5,520.6 L454.4,522.3 L456.2,524.1 L458.0,525.9 L459.7,527.7 L461.4,529.6 L463.0,531.6 L464.5,533.6 L465.9,535.6 L467.3,537.7 L468.5,539.9 L469.7,542.1 L470.9,544.3 L472.0,546.6 L473.0,548.9 L474.0,551.2 L474.9,553.6 L475.8,555.9 L476.7,558.4 L477.5,560.8 L478.3,563.2 L479.0,565.7 L479.7,568.1 L480.4,570.6 L481.1,573.0 L481.8,575.5 L482.5,578.0 L483.1,580.4 L483.8,582.9 L484.4,585.3 L485.1,587.8 L485.7,590.2 L486.3,592.6 L486.9,595.1 L487.5,597.5 L488.1,600.0 L488.7,602.4 L489.3,604.8 L489.8,607.3 L490.4,609.7 L490.9,612.2 L491.4,614.7 L492.0,617.1 L492.5,619.6 L493.0,622.1 L493.5,624.5 L494.0,627.0 L494.4,629.5 L494.9,632.0 L495.3,634.4 L495.8,636.9 L496.2,639.4 L496.6,641.9 L497.0,644.4 L497.4,646.9 L497.8,649.4 L498.1,651.9 L498.5,654.4 L498.8,656.9 L499.2,659.4 L499.5,661.9 L499.8,664.4 L500.1,666.9 L500.4,669.4 L500.7,671.9 L500.9,674.4 L501.2,676.9 L501.4,679.5 L501.7,682.0 L501.9,684.5 L502.1,687.0 L502.3,689.5 L502.5,692.0 L502.7,694.5 L502.9,697.0 L503.1,699.5 L503.3,702.1 L503.5,704.6 L503.7,707.1 L503.9,709.6 L504.0,712.1 L504.2,714.6 L504.4,717.1 L504.6,719.7 L504.7,722.2 L504.9,724.7 L505.1,727.2"/>
<path d="M1109.3,356.7 L1111.8,357.2 L1114.2,357.6 L1116.7,358.1 L1119.2,358.6 L1121.6,359.1 L1124.1,359.5 L1126.6,360.0 L1129.0,360.5 L1131.5,360.9 L1134.0,361.4 L1136.5,361.8 L1138.9,362.3 L1141.4,362.8 L1143.9,363.2 L1146.3,363.7 L1148.8,364.1 L1151.3,364.5 L1153.8,365.0 L1156.3,365.4 L1158.7,365.8 L1161.2,366.3 L1163.7,366.7 L1166.2,367.2 L1168.6,367.7 L1171.1,368.2 L1173.6,368.7 L1176.0,369.2 L1178.5,369.8 L1180.9,370.3 L1183.3,371.0 L1185.7,371.6 L1188.2,372.3 L1190.6,373.0 L1193.0,373.8 L1195.4,374.5 L1197.8,375.3 L1200.1,376.1 L1202.5,377.0 L1204.9,377.8 L1207.2,378.7 L1209.6,379.6 L1211.9,380.5 L1214.3,381.5 L1216.6,382.4 L1218.9,383.4 L1221.2,384.4 L1223.5,385.5 L1225.8,386.5 L1228.1,387.6 L1230.3,388.8 L1232.5,390.0 L1234.7,391.3 L1236.8,392.6 L1238.9,394.0 L1241.0,395.5 L1243.0,397.1 L1244.9,398.7 L1246.8,400.4 L1248.6,402.2 L1250.3,404.1 L1251.8,406.1 L1253.2,408.2 L1254.5,410.4 L1255.6,412.7 L1256.5,415.0 L1257.3,417.4 L1257.8,419.9 L1258.2,422.4 L1258.5,425.0 L1258.5,427.5 L1258.4,430.0 L1258.1,432.5 L1257.6,435.0 L1257.0,437.4 L1256.3,439.9 L1255.6,442.3 L1254.7,444.7 L1253.7,447.0 L1252.7,449.4 L1251.6,451.6 L1250.3,453.8 L1249.0,455.9 L1247.5,458.0 L1246.0,459.9 L1244.3,461.7 L1242.5,463.4 L1240.6,465.1 L1238.6,466.7 L1236.6,468.2 L1234.5,469.6 L1232.4,471.0 L1230.2,472.4 L1228.1,473.8 L1225.9,475.1 L1223.7,476.5 L1221.5,477.8 L1219.4,479.1 L1217.2,480.4 L1215.0,481.7 L1212.8,483.0 L1210.6,484.3 L1208.4,485.5 L1206.3,486.8 L1204.1,488.0 L1201.9,489.2 L1199.7,490.4 L1197.5,491.6 L1195.3,492.8 L1193.0,494.0 L1190.8,495.2 L1188.6,496.3 L1186.4,497.5 L1184.1,498.6 L1181.9,499.7 L1179.7,500.8 L1177.4,501.9 L1175.1,503.0 L1172.9,504.0 L1170.6,505.1 L1168.3,506.1 L1166.1,507.1 L1163.8,508.1 L1161.5,509.1 L1159.1,510.1 L1156.8,511.0 L1154.5,512.0 L1152.2,512.9 L1149.8,513.8 L1147.5,514.7 L1145.1,515.6 L1142.8,516.5 L1140.4,517.4 L1138.1,518.2 L1135.7,519.0 L1133.3,519.9 L1130.9,520.7 L1128.5,521.5 L1126.1,522.2 L1123.7,523.0 L1121.3,523.8 L1118.9,524.5 L1116.5,525.2 L1114.1,525.9 L1111.7,526.6 L1109.2,527.3 L1106.8,528.0 L1104.4,528.6 L1101.9,529.3 L1099.5,529.9 L1097.1,530.5 L1094.6,531.2 L1092.2,531.8 L1089.7,532.3 L1087.3,532.9 L1084.8,533.5 L1082.4,534.0 L1079.9,534.6 L1077.5,535.1 L1075.0,535.6 L1072.6,536.2 L1070.1,536.7 L1067.6,537.2 L1065.2,537.7 L1062.7,538.2 L1060.3,538.7 L1057.8,539.1 L1055.3,539.6 L1052.9,540.1 L1050.4,540.6 L1047.9,541.0 L1045.4,541.5 L1043.0,541.9 L1040.5,542.4 L1038.0,542.9 L1035.6,543.3 L1033.1,543.8 L1030.6,544.2 L1028.1,544.7 L1025.7,545.1 L1023.2,545.6 L1020.7,546.0 L1018.2,546.5 L1015.8,546.9 L1013.3,547.4 L1010.8,547.8 L1008.3,548.2 L1005.8,548.7 L1003.4,549.1 L1000.9,549.5 L998.4,549.9 L995.9,550.3 L993.5,550.8 L991.0,551.2 L988.5,551.6 L986.0,552.0 L983.6,552.4 L981.1,552.7 L978.6,553.1 L976.2,553.5 L973.7,553.9 L971.2,554.3 L968.7,554.7 L966.2,555.1 L963.8,555.5 L961.3,555.9 L958.8,556.3 L956.3,556.7 L953.8,557.2 L951.4,557.6 L948.9,558.0 L946.4,558.5 L943.9,559.0 L941.4,559.4 L938.9,559.9 L936.4,560.5 L933.9,561.0 L931.5,561.7 L929.0,562.3 L926.6,563.0 L924.2,563.8 L921.9,564.6 L919.5,565.6 L917.2,566.6 L915.0,567.6 L912.8,568.8 L910.6,570.1 L908.5,571.5 L906.5,572.9 L904.4,574.4 L902.4,576.0 L900.5,577.6 L898.6,579.2 L896.7,580.9 L894.8,582.6 L893.0,584.3 L891.2,586.1 L889.5,587.9 L887.8,589.7 L886.1,591.6 L884.4,593.5 L882.8,595.4 L881.2,597.4 L879.7,599.4 L878.2,601.4 L876.7,603.4 L875.2,605.4 L873.7,607.5 L872.3,609.5 L870.9,611.6 L869.5,613.7 L868.1,615.8 L866.7,617.9 L865.3,620.0 L863.9,622.1 L862.6,624.2 L861.2,626.3 L859.9,628.5 L858.5,630.6 L857.2,632.7 L855.9,634.9 L854.6,637.0 L853.3,639.2 L852.0,641.3 L850.8,643.5 L849.6,645.7 L848.4,647.9 L847.2,650.1 L846.0,652.4 L844.9,654.6 L843.7,656.8 L842.6,659.1 L841.4,661.3 L840.3,663.6 L839.2,665.8 L838.1,668.1 L837.0,670.3 L835.9,672.6 L834.8,674.8 L833.7,677.1 L832.5,679.3 L831.4,681.6 L830.3,683.8 L829.2,686.1 L828.0,688.3 L826.9,690.6 L825.7,692.8 L824.5,695.0 L823.3,697.2 L822.1,699.4 L820.9,701.6 L819.7,703.8 L818.5,706.0 L817.2,708.2 L816.0,710.4 L814.7,712.6 L813.5,714.7 L812.2,716.9 L811.0,719.1 L809.7,721.3 L808.4,723.4 L807.2,725.6 L805.9,727.8 L804.6,730.0 L803.4,732.1 L802.1,734.3"/>
</g>
<g stroke="#0000f5" stroke-dasharray="18.5,3.5,2,3">
<path d="M261.5,193.9 L134.3,591.7"/>
<path d="M785.7,246.9 L1112,333.5 L1549.7,404.4"/>
<path d="M966,310.1 L1020,319.5 L1136.6,340.2"/>
<path d="M1086.4,313.8 L1085,322"/>
</g>
</g>
<g stroke="#505050" stroke-width="1" fill="none"><path d="M117.5,865 L117.5,895.5 L147,895.5"/></g>
<text x="119" y="866" font-size="12" fill="#505050" font-family="Liberation Sans">y</text>
<text x="149" y="896" font-size="12" fill="#505050" font-family="Liberation Sans">x</text>
<path d="M680.5,721.5 L680.5,737.5 L684.5,733.5 L687.5,739.5 L689.5,738.5 L686.5,732.5 L691.5,732.5 Z" fill="#fff" stroke="#000" stroke-width="1"/>
</svg>
<svg class="abs" style="left:0;top:930px" width="1554" height="10">
  <path d="M114.5,10 L114.5,3.5 L189.5,3.5 L189.5,10 Z" fill="#dcdee2" stroke="#c8cfdc"/>
  <path d="M189.5,10 L189.5,3.5 L232.5,3.5 L232.5,10 Z" fill="#dcdee2" stroke="#c8cfdc"/>
  <path d="M232.5,10 L232.5,3.5 L276.5,3.5 L276.5,10 Z" fill="#dcdee2" stroke="#c8cfdc"/>
  <line x1="80.5" y1="3" x2="80.5" y2="10" stroke="#c8cfdc"/>
  <line x1="302.5" y1="3" x2="302.5" y2="10" stroke="#c8cfdc"/>
</svg>
<div class="abs" style="left:88px;top:936px;font-size:12px;line-height:14px;color:#000;white-space:nowrap">Top</div>
<div class="abs" style="left:124px;top:936px;font-size:12px;line-height:14px;color:#000;white-space:nowrap">Perspective</div>
<div class="abs" style="left:199px;top:936px;font-size:12px;line-height:14px;color:#000;white-space:nowrap">Front</div>
<div class="abs" style="left:242px;top:936px;font-size:12px;line-height:14px;color:#000;white-space:nowrap">Right</div>
<div class="abs" style="left:286px;top:936px;font-size:12px;line-height:14px;color:#000;white-space:nowrap">+</div>
</body></html>
